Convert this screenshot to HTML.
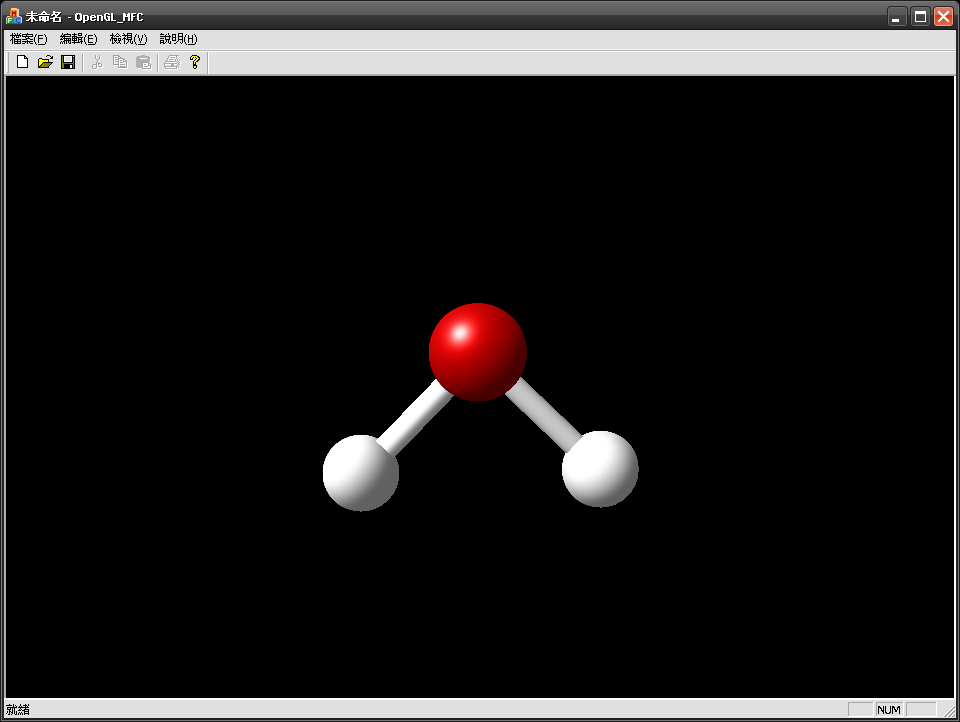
<!DOCTYPE html>
<html><head><meta charset="utf-8">
<style>
html,body{margin:0;padding:0;width:960px;height:722px;overflow:hidden;background:#000;font-family:"Liberation Sans",sans-serif;}
svg{position:absolute;left:0;top:0;}
</style></head><body>
<svg width="960" height="722" viewBox="0 0 960 722" shape-rendering="crispEdges">
<defs>
<linearGradient id="tg1" x1="0" y1="2" x2="0" y2="15" gradientUnits="userSpaceOnUse">
<stop offset="0" stop-color="#6c6c6c"/><stop offset="1" stop-color="#585858"/>
</linearGradient>
<linearGradient id="tg2" x1="0" y1="15" x2="0" y2="29" gradientUnits="userSpaceOnUse">
<stop offset="0" stop-color="#3a3a3a"/><stop offset="1" stop-color="#272727"/>
</linearGradient>
<linearGradient id="bt1" x1="0" y1="7" x2="0" y2="15" gradientUnits="userSpaceOnUse">
<stop offset="0" stop-color="#606060"/><stop offset="1" stop-color="#555555"/>
</linearGradient>
<linearGradient id="bt2" x1="0" y1="15" x2="0" y2="26" gradientUnits="userSpaceOnUse">
<stop offset="0" stop-color="#454545"/><stop offset="1" stop-color="#3c3c3c"/>
</linearGradient>
<linearGradient id="cl1" x1="0" y1="7" x2="0" y2="15" gradientUnits="userSpaceOnUse">
<stop offset="0" stop-color="#e07a66"/><stop offset="1" stop-color="#d86a52"/>
</linearGradient>
<linearGradient id="cl2" x1="0" y1="15" x2="0" y2="26" gradientUnits="userSpaceOnUse">
<stop offset="0" stop-color="#d83612"/><stop offset="1" stop-color="#e0704e"/>
</linearGradient>
</defs>
<!-- window frame -->
<g shape-rendering="auto">
<path d="M6 0H954A6 6 0 0 1 960 6V722H0V6A6 6 0 0 1 6 0Z" fill="#1c1c1c"/>
<path d="M6 1H954A5 5 0 0 1 959 6V721H1V6A5 5 0 0 1 6 1Z" fill="#7a7a7a"/>
<path d="M6 2H954A4 4 0 0 1 958 6V720H2V6A4 4 0 0 1 6 2Z" fill="#1e1e1e"/>
<path d="M6 2H954A4 4 0 0 1 958 6V718H2V6A4 4 0 0 1 6 2Z" fill="#262626"/>
<path d="M6 2H954A4 4 0 0 1 958 6V15H2V6A4 4 0 0 1 6 2Z" fill="url(#tg1)"/>
</g>
<rect x="2" y="15" width="956" height="14" fill="url(#tg2)"/>
<rect x="2" y="29" width="956" height="1" fill="#141414"/>
<!-- caption buttons -->
<g>
<rect x="887" y="6" width="21" height="21" rx="4" fill="#242424" shape-rendering="auto"/>
<rect x="888" y="7" width="19" height="19" rx="3" fill="#6c6c6c" shape-rendering="auto"/>
<rect x="889" y="8" width="17" height="7" fill="url(#bt1)"/>
<rect x="889" y="15" width="17" height="10" fill="url(#bt2)"/>
<rect x="892" y="19" width="7" height="3" fill="#fff"/>
<rect x="910" y="6" width="21" height="21" rx="4" fill="#242424" shape-rendering="auto"/>
<rect x="911" y="7" width="19" height="19" rx="3" fill="#6c6c6c" shape-rendering="auto"/>
<rect x="912" y="8" width="17" height="7" fill="url(#bt1)"/>
<rect x="912" y="15" width="17" height="10" fill="url(#bt2)"/>
<path d="M915 11h11v11h-11zM916 14v7h9v-7z" fill="#fff" fill-rule="evenodd"/>
<rect x="933" y="6" width="21" height="21" rx="4" fill="#242424" shape-rendering="auto"/>
<rect x="934" y="7" width="19" height="19" rx="3" fill="#f09a88" shape-rendering="auto"/>
<rect x="935" y="8" width="17" height="7" fill="url(#cl1)"/>
<rect x="935" y="15" width="17" height="10" fill="url(#cl2)"/>
</g>
<g shape-rendering="auto" stroke="#fff" stroke-width="2.1" stroke-linecap="square">
<path d="M939 12L948 21M948 12L939 21"/>
</g>
<!-- title icon -->
<g>
<rect x="7" y="16" width="7" height="1" fill="#b8dcb0"/>
<rect x="14" y="16" width="7" height="1" fill="#b8c8f0"/>
<rect x="21" y="17" width="1" height="6" fill="#d8d8e8"/>
<rect x="6" y="17" width="8" height="7" fill="#2a9a44"/>
<rect x="6" y="23" width="8" height="1" fill="#187030"/>
<rect x="6" y="17" width="1" height="7" fill="#9ad0a0"/>
<path d="M8 18h4v1h-3v1h2v1h-2v2h-1z" fill="#d8f0c0"/>
<rect x="14" y="17" width="7" height="7" fill="#4a8ee0"/>
<rect x="14" y="23" width="7" height="1" fill="#2a60b8"/>
<path d="M17 18h3v1h-3zM16 19h1v3h-1zM17 22h3v1h-3z" fill="#1848b0"/>
<rect x="11" y="8" width="6" height="2" fill="#f4c89a"/>
<rect x="17" y="9" width="2" height="7" fill="#d8d8d8"/>
<rect x="10" y="10" width="7" height="7" fill="#f08424"/>
<rect x="10" y="16" width="7" height="1" fill="#c05810"/>
<path d="M12 11h1v5h-1zM15 11h1v5h-1zM13 12h1v2h-1zM14 12h1v2h-1z" fill="#a81818"/>
</g>
<!-- title text -->
<g transform="translate(1,1)" fill="#140a0a">
<path d="M31 11h2v1h-2zM43 11h2v1h-2zM53 11h2v1h-2zM31 12h2v1h-2zM42 12h4v1h-4zM53 12h8v1h-8zM27 13h10v1h-10zM41 13h2v1h-2zM45 13h2v1h-2zM53 13h2v1h-2zM58 13h2v1h-2zM31 14h2v1h-2zM38 14h12v1h-12zM52 14h4v1h-4zM57 14h2v1h-2zM26 15h12v1h-12zM51 15h2v1h-2zM55 15h3v1h-3zM31 16h2v1h-2zM39 16h10v1h-10zM55 16h2v1h-2zM30 17h4v1h-4zM39 17h2v1h-2zM42 17h4v1h-4zM47 17h2v1h-2zM53 17h8v1h-8zM29 18h6v1h-6zM39 18h2v1h-2zM42 18h4v1h-4zM47 18h2v1h-2zM50 18h5v1h-5zM59 18h2v1h-2zM28 19h2v1h-2zM31 19h2v1h-2zM34 19h2v1h-2zM39 19h7v1h-7zM47 19h2v1h-2zM53 19h2v1h-2zM59 19h2v1h-2zM26 20h3v1h-3zM31 20h2v1h-2zM35 20h3v1h-3zM39 20h2v1h-2zM42 20h7v1h-7zM53 20h2v1h-2zM59 20h2v1h-2zM31 21h2v1h-2zM44 21h2v1h-2zM53 21h8v1h-8z"/><path d="M76 13h5v1h-5zM75 14h3v1h-3zM79 14h3v1h-3zM75 15h2v1h-2zM80 15h2v1h-2zM75 16h2v1h-2zM80 16h2v1h-2zM75 17h2v1h-2zM80 17h2v1h-2zM75 18h2v1h-2zM80 18h2v1h-2zM75 19h3v1h-3zM79 19h3v1h-3zM76 20h5v1h-5zM83 15h5v1h-5zM83 16h2v1h-2zM87 16h2v1h-2zM83 17h2v1h-2zM87 17h2v1h-2zM83 18h2v1h-2zM87 18h2v1h-2zM83 19h2v1h-2zM87 19h2v1h-2zM83 20h5v1h-5zM83 21h2v1h-2zM83 22h2v1h-2zM91 15h4v1h-4zM90 16h2v1h-2zM94 16h2v1h-2zM90 17h6v1h-6zM90 18h2v1h-2zM90 19h2v1h-2zM94 19h2v1h-2zM91 20h4v1h-4zM97 15h5v1h-5zM97 16h2v1h-2zM101 16h2v1h-2zM97 17h2v1h-2zM101 17h2v1h-2zM97 18h2v1h-2zM101 18h2v1h-2zM97 19h2v1h-2zM101 19h2v1h-2zM97 20h2v1h-2zM101 20h2v1h-2zM105 13h4v1h-4zM104 14h2v1h-2zM108 14h2v1h-2zM104 15h2v1h-2zM104 16h2v1h-2zM107 16h3v1h-3zM104 17h2v1h-2zM108 17h2v1h-2zM104 18h2v1h-2zM108 18h2v1h-2zM105 19h2v1h-2zM108 19h2v1h-2zM106 20h4v1h-4zM111 13h2v1h-2zM111 14h2v1h-2zM111 15h2v1h-2zM111 16h2v1h-2zM111 17h2v1h-2zM111 18h2v1h-2zM111 19h2v1h-2zM111 20h5v1h-5zM117 22h6v1h-6zM123 13h2v1h-2zM128 13h2v1h-2zM123 14h3v1h-3zM127 14h3v1h-3zM123 15h3v1h-3zM127 15h3v1h-3zM123 16h7v1h-7zM123 17h2v1h-2zM128 17h2v1h-2zM123 18h2v1h-2zM128 18h2v1h-2zM123 19h2v1h-2zM128 19h2v1h-2zM123 20h2v1h-2zM128 20h2v1h-2zM131 13h5v1h-5zM131 14h2v1h-2zM131 15h2v1h-2zM131 16h4v1h-4zM131 17h2v1h-2zM131 18h2v1h-2zM131 19h2v1h-2zM131 20h2v1h-2zM138 13h4v1h-4zM137 14h2v1h-2zM141 14h2v1h-2zM137 15h2v1h-2zM137 16h2v1h-2zM137 17h2v1h-2zM137 18h2v1h-2zM137 19h2v1h-2zM141 19h2v1h-2zM138 20h4v1h-4zM68 17h3v1h-3z"/>
</g>
<g fill="#ffffff">
<path d="M31 11h2v1h-2zM43 11h2v1h-2zM53 11h2v1h-2zM31 12h2v1h-2zM42 12h4v1h-4zM53 12h8v1h-8zM27 13h10v1h-10zM41 13h2v1h-2zM45 13h2v1h-2zM53 13h2v1h-2zM58 13h2v1h-2zM31 14h2v1h-2zM38 14h12v1h-12zM52 14h4v1h-4zM57 14h2v1h-2zM26 15h12v1h-12zM51 15h2v1h-2zM55 15h3v1h-3zM31 16h2v1h-2zM39 16h10v1h-10zM55 16h2v1h-2zM30 17h4v1h-4zM39 17h2v1h-2zM42 17h4v1h-4zM47 17h2v1h-2zM53 17h8v1h-8zM29 18h6v1h-6zM39 18h2v1h-2zM42 18h4v1h-4zM47 18h2v1h-2zM50 18h5v1h-5zM59 18h2v1h-2zM28 19h2v1h-2zM31 19h2v1h-2zM34 19h2v1h-2zM39 19h7v1h-7zM47 19h2v1h-2zM53 19h2v1h-2zM59 19h2v1h-2zM26 20h3v1h-3zM31 20h2v1h-2zM35 20h3v1h-3zM39 20h2v1h-2zM42 20h7v1h-7zM53 20h2v1h-2zM59 20h2v1h-2zM31 21h2v1h-2zM44 21h2v1h-2zM53 21h8v1h-8z"/><path d="M76 13h5v1h-5zM75 14h3v1h-3zM79 14h3v1h-3zM75 15h2v1h-2zM80 15h2v1h-2zM75 16h2v1h-2zM80 16h2v1h-2zM75 17h2v1h-2zM80 17h2v1h-2zM75 18h2v1h-2zM80 18h2v1h-2zM75 19h3v1h-3zM79 19h3v1h-3zM76 20h5v1h-5zM83 15h5v1h-5zM83 16h2v1h-2zM87 16h2v1h-2zM83 17h2v1h-2zM87 17h2v1h-2zM83 18h2v1h-2zM87 18h2v1h-2zM83 19h2v1h-2zM87 19h2v1h-2zM83 20h5v1h-5zM83 21h2v1h-2zM83 22h2v1h-2zM91 15h4v1h-4zM90 16h2v1h-2zM94 16h2v1h-2zM90 17h6v1h-6zM90 18h2v1h-2zM90 19h2v1h-2zM94 19h2v1h-2zM91 20h4v1h-4zM97 15h5v1h-5zM97 16h2v1h-2zM101 16h2v1h-2zM97 17h2v1h-2zM101 17h2v1h-2zM97 18h2v1h-2zM101 18h2v1h-2zM97 19h2v1h-2zM101 19h2v1h-2zM97 20h2v1h-2zM101 20h2v1h-2zM105 13h4v1h-4zM104 14h2v1h-2zM108 14h2v1h-2zM104 15h2v1h-2zM104 16h2v1h-2zM107 16h3v1h-3zM104 17h2v1h-2zM108 17h2v1h-2zM104 18h2v1h-2zM108 18h2v1h-2zM105 19h2v1h-2zM108 19h2v1h-2zM106 20h4v1h-4zM111 13h2v1h-2zM111 14h2v1h-2zM111 15h2v1h-2zM111 16h2v1h-2zM111 17h2v1h-2zM111 18h2v1h-2zM111 19h2v1h-2zM111 20h5v1h-5zM117 22h6v1h-6zM123 13h2v1h-2zM128 13h2v1h-2zM123 14h3v1h-3zM127 14h3v1h-3zM123 15h3v1h-3zM127 15h3v1h-3zM123 16h7v1h-7zM123 17h2v1h-2zM128 17h2v1h-2zM123 18h2v1h-2zM128 18h2v1h-2zM123 19h2v1h-2zM128 19h2v1h-2zM123 20h2v1h-2zM128 20h2v1h-2zM131 13h5v1h-5zM131 14h2v1h-2zM131 15h2v1h-2zM131 16h4v1h-4zM131 17h2v1h-2zM131 18h2v1h-2zM131 19h2v1h-2zM131 20h2v1h-2zM138 13h4v1h-4zM137 14h2v1h-2zM141 14h2v1h-2zM137 15h2v1h-2zM137 16h2v1h-2zM137 17h2v1h-2zM137 18h2v1h-2zM137 19h2v1h-2zM141 19h2v1h-2zM138 20h4v1h-4zM68 17h3v1h-3z"/>
</g>
<!-- client area background -->
<rect x="4" y="30" width="952" height="688" fill="#e0e0e0"/>
<!-- menu text -->
<path d="M12 33h1v1h-1zM14 33h1v1h-1zM17 33h1v1h-1zM20 33h1v1h-1zM27 33h1v1h-1zM12 34h1v1h-1zM15 34h1v1h-1zM17 34h1v1h-1zM19 34h1v1h-1zM22 34h11v1h-11zM10 35h11v1h-11zM22 35h1v1h-1zM26 35h1v1h-1zM32 35h1v1h-1zM12 36h1v1h-1zM14 36h1v1h-1zM16 36h1v1h-1zM18 36h1v1h-1zM20 36h1v1h-1zM22 36h11v1h-11zM12 37h2v1h-2zM16 37h3v1h-3zM25 37h1v1h-1zM28 37h1v1h-1zM12 38h1v1h-1zM14 38h1v1h-1zM26 38h4v1h-4zM11 39h2v1h-2zM14 39h7v1h-7zM22 39h5v1h-5zM30 39h3v1h-3zM10 40h1v1h-1zM12 40h1v1h-1zM14 40h1v1h-1zM17 40h1v1h-1zM20 40h1v1h-1zM27 40h1v1h-1zM12 41h1v1h-1zM14 41h7v1h-7zM22 41h11v1h-11zM12 42h1v1h-1zM14 42h1v1h-1zM17 42h1v1h-1zM20 42h1v1h-1zM25 42h1v1h-1zM27 42h1v1h-1zM29 42h1v1h-1zM12 43h1v1h-1zM14 43h7v1h-7zM22 43h3v1h-3zM27 43h1v1h-1zM30 43h3v1h-3zM36 34h1v1h-1zM35 35h1v1h-1zM35 36h1v1h-1zM34 37h1v1h-1zM34 38h1v1h-1zM34 39h1v1h-1zM34 40h1v1h-1zM34 41h1v1h-1zM35 42h1v1h-1zM35 43h1v1h-1zM36 44h1v1h-1zM38 35h5v1h-5zM38 36h1v1h-1zM38 37h1v1h-1zM38 38h5v1h-5zM38 39h1v1h-1zM38 40h1v1h-1zM38 41h1v1h-1zM38 42h1v1h-1zM38 44h6v1h-6zM44 34h1v1h-1zM45 35h1v1h-1zM45 36h1v1h-1zM46 37h1v1h-1zM46 38h1v1h-1zM46 39h1v1h-1zM46 40h1v1h-1zM46 41h1v1h-1zM45 42h1v1h-1zM45 43h1v1h-1zM44 44h1v1h-1zM62 33h1v1h-1zM67 33h1v1h-1zM74 33h1v1h-1zM78 33h4v1h-4zM62 34h1v1h-1zM64 34h7v1h-7zM72 34h5v1h-5zM78 34h1v1h-1zM81 34h1v1h-1zM61 35h1v1h-1zM63 35h2v1h-2zM70 35h1v1h-1zM74 35h1v1h-1zM78 35h4v1h-4zM60 36h11v1h-11zM72 36h5v1h-5zM62 37h1v1h-1zM64 37h1v1h-1zM72 37h1v1h-1zM74 37h1v1h-1zM76 37h7v1h-7zM61 38h1v1h-1zM63 38h8v1h-8zM72 38h5v1h-5zM78 38h1v1h-1zM81 38h1v1h-1zM60 39h3v1h-3zM64 39h1v1h-1zM66 39h1v1h-1zM68 39h1v1h-1zM70 39h1v1h-1zM72 39h1v1h-1zM74 39h1v1h-1zM76 39h1v1h-1zM78 39h4v1h-4zM64 40h7v1h-7zM72 40h5v1h-5zM78 40h1v1h-1zM81 40h1v1h-1zM61 41h1v1h-1zM63 41h2v1h-2zM66 41h1v1h-1zM68 41h1v1h-1zM70 41h1v1h-1zM74 41h1v1h-1zM78 41h1v1h-1zM80 41h3v1h-3zM60 42h1v1h-1zM62 42h1v1h-1zM64 42h1v1h-1zM66 42h1v1h-1zM68 42h1v1h-1zM70 42h1v1h-1zM72 42h8v1h-8zM81 42h1v1h-1zM60 43h1v1h-1zM62 43h1v1h-1zM64 43h1v1h-1zM66 43h1v1h-1zM69 43h2v1h-2zM74 43h1v1h-1zM81 43h1v1h-1zM86 34h1v1h-1zM85 35h1v1h-1zM85 36h1v1h-1zM84 37h1v1h-1zM84 38h1v1h-1zM84 39h1v1h-1zM84 40h1v1h-1zM84 41h1v1h-1zM85 42h1v1h-1zM85 43h1v1h-1zM86 44h1v1h-1zM88 35h5v1h-5zM88 36h1v1h-1zM88 37h1v1h-1zM88 38h5v1h-5zM88 39h1v1h-1zM88 40h1v1h-1zM88 41h1v1h-1zM88 42h5v1h-5zM88 44h6v1h-6zM94 34h1v1h-1zM95 35h1v1h-1zM95 36h1v1h-1zM96 37h1v1h-1zM96 38h1v1h-1zM96 39h1v1h-1zM96 40h1v1h-1zM96 41h1v1h-1zM95 42h1v1h-1zM95 43h1v1h-1zM94 44h1v1h-1zM112 33h1v1h-1zM117 33h1v1h-1zM123 33h1v1h-1zM127 33h5v1h-5zM112 34h1v1h-1zM116 34h1v1h-1zM118 34h1v1h-1zM124 34h1v1h-1zM127 34h1v1h-1zM131 34h1v1h-1zM110 35h4v1h-4zM115 35h1v1h-1zM119 35h1v1h-1zM122 35h10v1h-10zM112 36h1v1h-1zM114 36h1v1h-1zM116 36h3v1h-3zM120 36h1v1h-1zM125 36h1v1h-1zM127 36h1v1h-1zM131 36h1v1h-1zM111 37h2v1h-2zM124 37h1v1h-1zM127 37h5v1h-5zM111 38h6v1h-6zM118 38h3v1h-3zM123 38h3v1h-3zM127 38h1v1h-1zM131 38h1v1h-1zM110 39h1v1h-1zM112 39h1v1h-1zM114 39h1v1h-1zM116 39h1v1h-1zM118 39h1v1h-1zM120 39h1v1h-1zM122 39h1v1h-1zM124 39h1v1h-1zM126 39h6v1h-6zM110 40h1v1h-1zM112 40h1v1h-1zM114 40h3v1h-3zM118 40h3v1h-3zM124 40h1v1h-1zM128 40h1v1h-1zM130 40h1v1h-1zM112 41h1v1h-1zM115 41h1v1h-1zM119 41h1v1h-1zM124 41h1v1h-1zM128 41h1v1h-1zM130 41h1v1h-1zM132 41h1v1h-1zM112 42h1v1h-1zM114 42h1v1h-1zM116 42h1v1h-1zM118 42h2v1h-2zM124 42h1v1h-1zM127 42h1v1h-1zM130 42h1v1h-1zM132 42h1v1h-1zM112 43h2v1h-2zM117 43h1v1h-1zM120 43h1v1h-1zM124 43h1v1h-1zM126 43h1v1h-1zM131 43h2v1h-2zM136 34h1v1h-1zM135 35h1v1h-1zM135 36h1v1h-1zM134 37h1v1h-1zM134 38h1v1h-1zM134 39h1v1h-1zM134 40h1v1h-1zM134 41h1v1h-1zM135 42h1v1h-1zM135 43h1v1h-1zM136 44h1v1h-1zM138 35h1v1h-1zM142 35h1v1h-1zM138 36h1v1h-1zM142 36h1v1h-1zM138 37h1v1h-1zM142 37h1v1h-1zM139 38h1v1h-1zM141 38h1v1h-1zM139 39h1v1h-1zM141 39h1v1h-1zM139 40h1v1h-1zM141 40h1v1h-1zM140 41h1v1h-1zM140 42h1v1h-1zM138 44h6v1h-6zM144 34h1v1h-1zM145 35h1v1h-1zM145 36h1v1h-1zM146 37h1v1h-1zM146 38h1v1h-1zM146 39h1v1h-1zM146 40h1v1h-1zM146 41h1v1h-1zM145 42h1v1h-1zM145 43h1v1h-1zM144 44h1v1h-1zM161 33h1v1h-1zM168 33h1v1h-1zM178 33h5v1h-5zM160 34h4v1h-4zM166 34h1v1h-1zM168 34h1v1h-1zM172 34h4v1h-4zM178 34h1v1h-1zM182 34h1v1h-1zM165 35h1v1h-1zM169 35h1v1h-1zM172 35h1v1h-1zM175 35h1v1h-1zM178 35h1v1h-1zM182 35h1v1h-1zM160 36h11v1h-11zM172 36h1v1h-1zM175 36h1v1h-1zM178 36h5v1h-5zM165 37h1v1h-1zM169 37h1v1h-1zM172 37h4v1h-4zM178 37h1v1h-1zM182 37h1v1h-1zM160 38h4v1h-4zM165 38h1v1h-1zM169 38h1v1h-1zM172 38h1v1h-1zM175 38h1v1h-1zM178 38h1v1h-1zM182 38h1v1h-1zM165 39h5v1h-5zM172 39h1v1h-1zM175 39h1v1h-1zM178 39h5v1h-5zM160 40h4v1h-4zM166 40h1v1h-1zM168 40h1v1h-1zM172 40h4v1h-4zM178 40h1v1h-1zM182 40h1v1h-1zM160 41h1v1h-1zM163 41h1v1h-1zM166 41h1v1h-1zM168 41h1v1h-1zM170 41h1v1h-1zM177 41h1v1h-1zM182 41h1v1h-1zM160 42h4v1h-4zM165 42h1v1h-1zM168 42h1v1h-1zM170 42h1v1h-1zM176 42h1v1h-1zM180 42h1v1h-1zM182 42h1v1h-1zM160 43h1v1h-1zM163 43h2v1h-2zM169 43h2v1h-2zM174 43h2v1h-2zM181 43h1v1h-1zM186 34h1v1h-1zM185 35h1v1h-1zM185 36h1v1h-1zM184 37h1v1h-1zM184 38h1v1h-1zM184 39h1v1h-1zM184 40h1v1h-1zM184 41h1v1h-1zM185 42h1v1h-1zM185 43h1v1h-1zM186 44h1v1h-1zM188 35h1v1h-1zM192 35h1v1h-1zM188 36h1v1h-1zM192 36h1v1h-1zM188 37h1v1h-1zM192 37h1v1h-1zM188 38h5v1h-5zM188 39h1v1h-1zM192 39h1v1h-1zM188 40h1v1h-1zM192 40h1v1h-1zM188 41h1v1h-1zM192 41h1v1h-1zM188 42h1v1h-1zM192 42h1v1h-1zM188 44h6v1h-6zM194 34h1v1h-1zM195 35h1v1h-1zM195 36h1v1h-1zM196 37h1v1h-1zM196 38h1v1h-1zM196 39h1v1h-1zM196 40h1v1h-1zM196 41h1v1h-1zM195 42h1v1h-1zM195 43h1v1h-1zM194 44h1v1h-1z" fill="#000"/>
<!-- dock top etched line -->
<rect x="4" y="49" width="952" height="1" fill="#f4f4f4"/>
<rect x="4" y="50" width="952" height="1" fill="#b4b4b4"/>
<rect x="4" y="51" width="952" height="1" fill="#ffffff"/>
<!-- toolbar borders -->
<rect x="4" y="52" width="1" height="22" fill="#f8f8f8"/>
<rect x="6" y="52" width="1" height="21" fill="#ffffff"/>
<rect x="8" y="52" width="1" height="21" fill="#a8a8a8"/>
<rect x="7" y="72" width="2" height="1" fill="#a8a8a8"/>
<rect x="82" y="54" width="1" height="18" fill="#a8a8a8"/>
<rect x="83" y="54" width="1" height="18" fill="#ffffff"/>
<rect x="157" y="54" width="1" height="18" fill="#a8a8a8"/>
<rect x="158" y="54" width="1" height="18" fill="#ffffff"/>
<rect x="207" y="52" width="1" height="22" fill="#a8a8a8"/>
<rect x="208" y="52" width="1" height="22" fill="#ffffff"/>
<path d="M17 55h8v1h-8zM17 56h1v1h-1zM24 56h2v1h-2zM17 57h1v1h-1zM24 57h1v1h-1zM26 57h1v1h-1zM17 58h1v1h-1zM24 58h4v1h-4zM17 59h1v1h-1zM27 59h1v1h-1zM17 60h1v1h-1zM27 60h1v1h-1zM17 61h1v1h-1zM27 61h1v1h-1zM17 62h1v1h-1zM27 62h1v1h-1zM17 63h1v1h-1zM27 63h1v1h-1zM17 64h1v1h-1zM27 64h1v1h-1zM17 65h1v1h-1zM27 65h1v1h-1zM17 66h1v1h-1zM27 66h1v1h-1zM17 67h11v1h-11z" fill="#000000"/>
<path d="M18 56h6v1h-6zM18 57h6v1h-6zM25 57h1v1h-1zM18 58h6v1h-6zM18 59h9v1h-9zM18 60h9v1h-9zM18 61h9v1h-9zM18 62h9v1h-9zM18 63h9v1h-9zM18 64h9v1h-9zM18 65h9v1h-9zM18 66h9v1h-9z" fill="#ffffff"/>
<path d="M47 55h3v1h-3zM46 56h1v1h-1zM50 56h1v1h-1zM52 56h1v1h-1zM51 57h2v1h-2zM39 58h3v1h-3zM50 58h3v1h-3zM38 59h1v1h-1zM42 59h7v1h-7zM38 60h1v1h-1zM48 60h1v1h-1zM38 61h1v1h-1zM48 61h1v1h-1zM38 62h1v1h-1zM43 62h10v1h-10zM38 63h1v1h-1zM42 63h1v1h-1zM51 63h1v1h-1zM38 64h1v1h-1zM41 64h1v1h-1zM50 64h1v1h-1zM38 65h1v1h-1zM40 65h1v1h-1zM49 65h1v1h-1zM38 66h2v1h-2zM48 66h1v1h-1zM38 67h11v1h-11z" fill="#000000"/>
<path d="M39 59h1v1h-1zM41 59h1v1h-1zM40 60h1v1h-1zM42 60h1v1h-1zM44 60h1v1h-1zM46 60h1v1h-1zM39 61h1v1h-1zM41 61h1v1h-1zM43 61h1v1h-1zM45 61h1v1h-1zM47 61h1v1h-1zM40 62h1v1h-1zM42 62h1v1h-1zM39 63h1v1h-1zM41 63h1v1h-1zM40 64h1v1h-1zM39 65h1v1h-1z" fill="#ffff00"/>
<path d="M40 59h1v1h-1zM39 60h1v1h-1zM41 60h1v1h-1zM43 60h1v1h-1zM45 60h1v1h-1zM47 60h1v1h-1zM40 61h1v1h-1zM42 61h1v1h-1zM44 61h1v1h-1zM46 61h1v1h-1zM39 62h1v1h-1zM41 62h1v1h-1zM40 63h1v1h-1zM39 64h1v1h-1z" fill="#ffffff"/>
<path d="M43 63h8v1h-8zM42 64h8v1h-8zM41 65h8v1h-8zM40 66h8v1h-8z" fill="#808000"/>
<path d="M61 55h14v1h-14zM61 56h1v1h-1zM63 56h1v1h-1zM72 56h1v1h-1zM74 56h1v1h-1zM61 57h1v1h-1zM63 57h1v1h-1zM72 57h3v1h-3zM61 58h1v1h-1zM63 58h1v1h-1zM72 58h1v1h-1zM74 58h1v1h-1zM61 59h1v1h-1zM63 59h1v1h-1zM72 59h1v1h-1zM74 59h1v1h-1zM61 60h1v1h-1zM63 60h1v1h-1zM72 60h1v1h-1zM74 60h1v1h-1zM61 61h1v1h-1zM63 61h1v1h-1zM72 61h1v1h-1zM74 61h1v1h-1zM61 62h1v1h-1zM63 62h10v1h-10zM74 62h1v1h-1zM61 63h1v1h-1zM74 63h1v1h-1zM61 64h1v1h-1zM64 64h9v1h-9zM74 64h1v1h-1zM61 65h1v1h-1zM64 65h6v1h-6zM72 65h1v1h-1zM74 65h1v1h-1zM61 66h1v1h-1zM64 66h6v1h-6zM72 66h1v1h-1zM74 66h1v1h-1zM61 67h1v1h-1zM64 67h6v1h-6zM72 67h1v1h-1zM74 67h1v1h-1zM61 68h14v1h-14z" fill="#000000"/>
<path d="M62 56h1v1h-1zM62 57h1v1h-1zM62 58h1v1h-1zM73 58h1v1h-1zM62 59h1v1h-1zM73 59h1v1h-1zM62 60h1v1h-1zM73 60h1v1h-1zM62 61h1v1h-1zM73 61h1v1h-1zM62 62h1v1h-1zM73 62h1v1h-1zM62 63h12v1h-12zM62 64h2v1h-2zM73 64h1v1h-1zM62 65h2v1h-2zM73 65h1v1h-1zM62 66h2v1h-2zM73 66h1v1h-1zM62 67h2v1h-2zM73 67h1v1h-1z" fill="#808000"/>
<path d="M64 56h8v1h-8zM73 56h1v1h-1zM64 57h1v1h-1zM71 57h1v1h-1zM64 58h1v1h-1zM71 58h1v1h-1zM64 59h1v1h-1zM71 59h1v1h-1zM64 60h1v1h-1zM71 60h1v1h-1zM64 61h8v1h-8zM70 65h2v1h-2zM70 66h2v1h-2zM70 67h2v1h-2z" fill="#ffffff"/>
<path d="M65 57h6v1h-6zM65 58h6v1h-6zM65 59h6v1h-6zM65 60h6v1h-6z" fill="#e0e0e0"/>
<path d="M96 56h1v1h-1zM100 56h1v1h-1zM96 57h1v1h-1zM100 57h1v1h-1zM96 58h1v1h-1zM100 58h1v1h-1zM96 59h1v1h-1zM100 59h1v1h-1zM97 60h1v1h-1zM99 60h1v1h-1zM98 61h1v1h-1zM98 62h1v1h-1zM97 63h1v1h-1zM99 63h1v1h-1zM97 64h1v1h-1zM99 64h3v1h-3zM94 65h4v1h-4zM99 65h1v1h-1zM102 65h1v1h-1zM93 66h1v1h-1zM97 66h1v1h-1zM99 66h1v1h-1zM102 66h1v1h-1zM93 67h1v1h-1zM97 67h1v1h-1zM100 67h3v1h-3zM93 68h1v1h-1zM97 68h1v1h-1zM94 69h3v1h-3z" fill="#ffffff"/>
<path d="M95 55h1v1h-1zM99 55h1v1h-1zM95 56h1v1h-1zM99 56h1v1h-1zM95 57h1v1h-1zM99 57h1v1h-1zM95 58h1v1h-1zM99 58h1v1h-1zM96 59h1v1h-1zM98 59h1v1h-1zM97 60h1v1h-1zM97 61h1v1h-1zM96 62h1v1h-1zM98 62h1v1h-1zM96 63h1v1h-1zM98 63h3v1h-3zM93 64h4v1h-4zM98 64h1v1h-1zM101 64h1v1h-1zM92 65h1v1h-1zM96 65h1v1h-1zM98 65h1v1h-1zM101 65h1v1h-1zM92 66h1v1h-1zM96 66h1v1h-1zM99 66h3v1h-3zM92 67h1v1h-1zM96 67h1v1h-1zM93 68h3v1h-3z" fill="#a0a0a0"/>
<path d="M114 56h6v1h-6zM114 57h1v1h-1zM119 57h2v1h-2zM114 58h1v1h-1zM116 58h2v1h-2zM119 58h1v1h-1zM121 58h1v1h-1zM114 59h1v1h-1zM119 59h6v1h-6zM114 60h1v1h-1zM116 60h4v1h-4zM124 60h2v1h-2zM114 61h1v1h-1zM119 61h1v1h-1zM121 61h2v1h-2zM124 61h1v1h-1zM126 61h1v1h-1zM114 62h1v1h-1zM116 62h4v1h-4zM124 62h4v1h-4zM114 63h1v1h-1zM119 63h1v1h-1zM121 63h3v1h-3zM127 63h1v1h-1zM114 64h1v1h-1zM119 64h1v1h-1zM127 64h1v1h-1zM114 65h6v1h-6zM121 65h5v1h-5zM127 65h1v1h-1zM119 66h1v1h-1zM127 66h1v1h-1zM119 67h1v1h-1zM121 67h5v1h-5zM127 67h1v1h-1zM119 68h9v1h-9z" fill="#ffffff"/>
<path d="M113 55h6v1h-6zM113 56h1v1h-1zM118 56h2v1h-2zM113 57h1v1h-1zM115 57h2v1h-2zM118 57h1v1h-1zM120 57h1v1h-1zM113 58h1v1h-1zM118 58h6v1h-6zM113 59h1v1h-1zM115 59h4v1h-4zM123 59h2v1h-2zM113 60h1v1h-1zM118 60h1v1h-1zM120 60h2v1h-2zM123 60h1v1h-1zM125 60h1v1h-1zM113 61h1v1h-1zM115 61h4v1h-4zM123 61h4v1h-4zM113 62h1v1h-1zM118 62h1v1h-1zM120 62h3v1h-3zM126 62h1v1h-1zM113 63h1v1h-1zM118 63h1v1h-1zM126 63h1v1h-1zM113 64h6v1h-6zM120 64h5v1h-5zM126 64h1v1h-1zM118 65h1v1h-1zM126 65h1v1h-1zM118 66h1v1h-1zM120 66h5v1h-5zM126 66h1v1h-1zM118 67h9v1h-9z" fill="#a0a0a0"/>
<path d="M142 56h4v1h-4zM138 57h12v1h-12zM137 58h14v1h-14zM137 59h14v1h-14zM137 60h14v1h-14zM137 61h14v1h-14zM137 62h14v1h-14zM137 63h13v1h-13zM137 64h14v1h-14zM137 65h15v1h-15zM137 66h15v1h-15zM137 67h15v1h-15zM138 68h14v1h-14zM143 69h9v1h-9z" fill="#ffffff"/>
<path d="M141 55h4v1h-4zM137 56h12v1h-12zM136 57h14v1h-14zM136 58h4v1h-4zM147 58h3v1h-3zM136 59h14v1h-14zM136 60h14v1h-14zM136 61h14v1h-14zM136 62h6v1h-6zM136 63h6v1h-6zM136 64h6v1h-6zM136 65h6v1h-6zM136 66h6v1h-6zM137 67h5v1h-5z" fill="#b0b0b0"/>
<path d="M140 58h7v1h-7zM143 63h5v1h-5zM143 64h1v1h-1zM146 64h2v1h-2zM149 64h1v1h-1zM143 65h5v1h-5zM143 66h1v1h-1zM148 66h2v1h-2zM143 67h7v1h-7z" fill="#ffffff"/>
<path d="M142 62h7v1h-7zM142 63h1v1h-1zM148 63h2v1h-2zM142 64h1v1h-1zM144 64h2v1h-2zM148 64h1v1h-1zM150 64h1v1h-1zM142 65h1v1h-1zM148 65h3v1h-3zM142 66h1v1h-1zM144 66h4v1h-4zM150 66h1v1h-1zM142 67h1v1h-1zM150 67h1v1h-1zM142 68h9v1h-9z" fill="#a0a0a0"/>
<path d="M170 56h10v1h-10zM169 57h1v1h-1zM177 57h1v1h-1zM169 58h1v1h-1zM171 58h5v1h-5zM177 58h1v1h-1zM168 59h1v1h-1zM177 59h1v1h-1zM168 60h1v1h-1zM170 60h5v1h-5zM176 60h1v1h-1zM178 60h1v1h-1zM167 61h1v1h-1zM176 61h1v1h-1zM178 61h1v1h-1zM180 61h1v1h-1zM166 62h12v1h-12zM179 62h1v1h-1zM165 63h1v1h-1zM178 63h1v1h-1zM180 63h1v1h-1zM165 64h13v1h-13zM179 64h1v1h-1zM165 65h1v1h-1zM172 65h3v1h-3zM178 65h1v1h-1zM180 65h1v1h-1zM165 66h1v1h-1zM172 66h3v1h-3zM177 66h1v1h-1zM179 66h1v1h-1zM165 67h14v1h-14zM166 68h1v1h-1zM177 68h1v1h-1zM179 68h1v1h-1zM167 69h11v1h-11z" fill="#ffffff"/>
<path d="M169 55h10v1h-10zM168 56h1v1h-1zM176 56h1v1h-1zM168 57h1v1h-1zM170 57h5v1h-5zM176 57h1v1h-1zM167 58h1v1h-1zM176 58h1v1h-1zM167 59h1v1h-1zM169 59h5v1h-5zM175 59h1v1h-1zM177 59h1v1h-1zM166 60h1v1h-1zM175 60h1v1h-1zM177 60h1v1h-1zM179 60h1v1h-1zM165 61h12v1h-12zM178 61h1v1h-1zM164 62h1v1h-1zM177 62h1v1h-1zM179 62h1v1h-1zM164 63h13v1h-13zM178 63h1v1h-1zM164 64h1v1h-1zM171 64h3v1h-3zM177 64h1v1h-1zM179 64h1v1h-1zM164 65h1v1h-1zM171 65h3v1h-3zM176 65h1v1h-1zM178 65h1v1h-1zM164 66h14v1h-14zM165 67h1v1h-1zM176 67h1v1h-1zM178 67h1v1h-1zM166 68h11v1h-11z" fill="#a8a8a8"/>
<path d="M192 55h5v1h-5zM191 56h1v1h-1zM197 56h2v1h-2zM190 57h1v1h-1zM193 57h1v1h-1zM195 57h1v1h-1zM198 57h2v1h-2zM190 58h1v1h-1zM192 58h1v1h-1zM196 58h1v1h-1zM199 58h1v1h-1zM190 59h3v1h-3zM195 59h1v1h-1zM198 59h2v1h-2zM194 60h1v1h-1zM197 60h2v1h-2zM193 61h1v1h-1zM196 61h2v1h-2zM193 62h1v1h-1zM195 62h1v1h-1zM193 63h1v1h-1zM195 63h1v1h-1zM193 64h3v1h-3zM193 65h4v1h-4zM193 66h1v1h-1zM196 66h1v1h-1zM193 67h1v1h-1zM196 67h1v1h-1zM194 68h2v1h-2z" fill="#000000"/>
<path d="M192 56h5v1h-5zM191 57h2v1h-2zM196 57h2v1h-2zM191 58h1v1h-1zM197 58h2v1h-2zM196 59h2v1h-2zM195 60h2v1h-2zM194 61h2v1h-2zM194 62h1v1h-1zM194 63h1v1h-1zM194 66h2v1h-2zM194 67h2v1h-2z" fill="#ffff00"/>
<path d="M194 57h1v1h-1z" fill="#ffffff"/>
<!-- canvas sunken border -->
<rect x="4" y="74" width="952" height="1" fill="#b4b4b4"/>
<rect x="4" y="75" width="952" height="1" fill="#a0a0a0"/>
<rect x="4" y="76" width="2" height="622" fill="#b0b0b0"/>
<rect x="954" y="76" width="2" height="624" fill="#ffffff"/>
<rect x="4" y="698" width="952" height="2" fill="#ffffff"/>
<rect x="6" y="76" width="948" height="622" fill="#000000"/>
<!-- status bar -->
<path d="M9 704h1v1h-1zM13 704h1v1h-1zM20 704h1v1h-1zM25 704h1v1h-1zM28 704h1v1h-1zM6 705h6v1h-6zM13 705h1v1h-1zM15 705h1v1h-1zM20 705h1v1h-1zM23 705h4v1h-4zM28 705h1v1h-1zM13 706h1v1h-1zM16 706h1v1h-1zM19 706h1v1h-1zM21 706h1v1h-1zM25 706h1v1h-1zM27 706h1v1h-1zM7 707h10v1h-10zM18 707h11v1h-11zM7 708h1v1h-1zM10 708h1v1h-1zM12 708h1v1h-1zM14 708h1v1h-1zM20 708h1v1h-1zM25 708h1v1h-1zM7 709h4v1h-4zM12 709h1v1h-1zM14 709h1v1h-1zM19 709h1v1h-1zM21 709h1v1h-1zM24 709h5v1h-5zM9 710h1v1h-1zM12 710h1v1h-1zM14 710h1v1h-1zM18 710h3v1h-3zM22 710h3v1h-3zM28 710h1v1h-1zM7 711h1v1h-1zM9 711h2v1h-2zM12 711h1v1h-1zM14 711h1v1h-1zM16 711h1v1h-1zM24 711h5v1h-5zM7 712h1v1h-1zM9 712h1v1h-1zM11 712h2v1h-2zM14 712h1v1h-1zM16 712h1v1h-1zM19 712h1v1h-1zM21 712h1v1h-1zM24 712h1v1h-1zM28 712h1v1h-1zM6 713h1v1h-1zM9 713h1v1h-1zM12 713h1v1h-1zM14 713h1v1h-1zM16 713h1v1h-1zM18 713h1v1h-1zM20 713h1v1h-1zM22 713h1v1h-1zM24 713h5v1h-5zM8 714h2v1h-2zM11 714h1v1h-1zM15 714h2v1h-2zM18 714h1v1h-1zM20 714h1v1h-1zM22 714h1v1h-1zM24 714h1v1h-1zM28 714h1v1h-1z" fill="#000"/>
<g fill="#a8a8a8">
<rect x="848" y="702" width="26" height="1"/><rect x="848" y="702" width="1" height="15"/>
<rect x="876" y="702" width="28" height="1"/><rect x="876" y="702" width="1" height="15"/>
<rect x="906" y="702" width="31" height="1"/><rect x="906" y="702" width="1" height="15"/>
</g>
<g fill="#ffffff">
<rect x="848" y="716" width="26" height="1"/><rect x="873" y="702" width="1" height="15"/>
<rect x="876" y="716" width="28" height="1"/><rect x="903" y="702" width="1" height="15"/>
<rect x="906" y="716" width="31" height="1"/><rect x="936" y="702" width="1" height="15"/>
</g>
<path d="M878 706h2v1h-2zM883 706h1v1h-1zM885 706h1v1h-1zM890 706h1v1h-1zM892 706h2v1h-2zM898 706h2v1h-2zM878 707h3v1h-3zM883 707h1v1h-1zM885 707h1v1h-1zM890 707h1v1h-1zM892 707h3v1h-3zM897 707h3v1h-3zM878 708h1v1h-1zM880 708h2v1h-2zM883 708h1v1h-1zM885 708h1v1h-1zM890 708h1v1h-1zM892 708h1v1h-1zM894 708h1v1h-1zM897 708h1v1h-1zM899 708h1v1h-1zM878 709h1v1h-1zM881 709h1v1h-1zM883 709h1v1h-1zM885 709h1v1h-1zM890 709h1v1h-1zM892 709h1v1h-1zM894 709h2v1h-2zM897 709h1v1h-1zM899 709h1v1h-1zM878 710h1v1h-1zM881 710h3v1h-3zM885 710h1v1h-1zM890 710h1v1h-1zM892 710h1v1h-1zM895 710h2v1h-2zM899 710h1v1h-1zM878 711h1v1h-1zM882 711h2v1h-2zM885 711h1v1h-1zM890 711h1v1h-1zM892 711h1v1h-1zM895 711h2v1h-2zM899 711h1v1h-1zM878 712h1v1h-1zM883 712h1v1h-1zM885 712h2v1h-2zM889 712h2v1h-2zM892 712h1v1h-1zM899 712h1v1h-1zM878 713h1v1h-1zM883 713h1v1h-1zM886 713h4v1h-4zM892 713h1v1h-1zM899 713h1v1h-1z" fill="#000"/>
<!-- size grip -->
<path d="M954 705h1v1h-1zM953 706h1v1h-1zM952 707h1v1h-1zM951 708h1v1h-1zM950 709h1v1h-1zM954 709h1v1h-1zM949 710h1v1h-1zM953 710h1v1h-1zM948 711h1v1h-1zM952 711h1v1h-1zM947 712h1v1h-1zM951 712h1v1h-1zM946 713h1v1h-1zM950 713h1v1h-1zM954 713h1v1h-1zM945 714h1v1h-1zM949 714h1v1h-1zM953 714h1v1h-1zM944 715h1v1h-1zM948 715h1v1h-1zM952 715h1v1h-1zM943 716h1v1h-1zM947 716h1v1h-1zM951 716h1v1h-1z" fill="#ffffff"/><path d="M954 706h1v1h-1zM953 707h1v1h-1zM954 707h1v1h-1zM952 708h1v1h-1zM953 708h1v1h-1zM951 709h1v1h-1zM952 709h1v1h-1zM950 710h1v1h-1zM951 710h1v1h-1zM954 710h1v1h-1zM949 711h1v1h-1zM950 711h1v1h-1zM953 711h1v1h-1zM954 711h1v1h-1zM948 712h1v1h-1zM949 712h1v1h-1zM952 712h1v1h-1zM953 712h1v1h-1zM947 713h1v1h-1zM948 713h1v1h-1zM951 713h1v1h-1zM952 713h1v1h-1zM946 714h1v1h-1zM947 714h1v1h-1zM950 714h1v1h-1zM951 714h1v1h-1zM954 714h1v1h-1zM945 715h1v1h-1zM946 715h1v1h-1zM949 715h1v1h-1zM950 715h1v1h-1zM953 715h1v1h-1zM954 715h1v1h-1zM944 716h1v1h-1zM945 716h1v1h-1zM948 716h1v1h-1zM949 716h1v1h-1zM952 716h1v1h-1zM953 716h1v1h-1z" fill="#a0a0a0"/>
</svg>
<svg width="960" height="722" viewBox="0 0 960 722">
<defs><linearGradient id="bg1" gradientUnits="userSpaceOnUse" x1="469.44" y1="344.23" x2="487.28" y2="361.46"><stop offset="0.000" stop-color="#ffffff"/><stop offset="0.050" stop-color="#ffffff"/><stop offset="0.100" stop-color="#ffffff"/><stop offset="0.150" stop-color="#ffffff"/><stop offset="0.200" stop-color="#ffffff"/><stop offset="0.250" stop-color="#ffffff"/><stop offset="0.300" stop-color="#ffffff"/><stop offset="0.350" stop-color="#ffffff"/><stop offset="0.400" stop-color="#ffffff"/><stop offset="0.450" stop-color="#ffffff"/><stop offset="0.500" stop-color="#f6f6f6"/><stop offset="0.550" stop-color="#ededed"/><stop offset="0.600" stop-color="#d6d6d6"/><stop offset="0.650" stop-color="#bfbfbf"/><stop offset="0.700" stop-color="#a7a7a7"/><stop offset="0.750" stop-color="#8f8f8f"/><stop offset="0.800" stop-color="#818181"/><stop offset="0.850" stop-color="#737373"/><stop offset="0.900" stop-color="#6f6f6f"/><stop offset="0.950" stop-color="#6c6c6c"/><stop offset="1.000" stop-color="#696969"/></linearGradient><linearGradient id="bg2" gradientUnits="userSpaceOnUse" x1="486.28" y1="343.82" x2="469.72" y2="361.18"><stop offset="0.000" stop-color="#737373"/><stop offset="0.050" stop-color="#979797"/><stop offset="0.100" stop-color="#a5a5a5"/><stop offset="0.150" stop-color="#afafaf"/><stop offset="0.200" stop-color="#b6b6b6"/><stop offset="0.250" stop-color="#bcbcbc"/><stop offset="0.300" stop-color="#c0c0c0"/><stop offset="0.350" stop-color="#c3c3c3"/><stop offset="0.400" stop-color="#c5c5c5"/><stop offset="0.450" stop-color="#c6c6c6"/><stop offset="0.500" stop-color="#c7c7c7"/><stop offset="0.550" stop-color="#c6c6c6"/><stop offset="0.600" stop-color="#c5c5c5"/><stop offset="0.650" stop-color="#c3c3c3"/><stop offset="0.700" stop-color="#c0c0c0"/><stop offset="0.750" stop-color="#bcbcbc"/><stop offset="0.800" stop-color="#b6b6b6"/><stop offset="0.850" stop-color="#afafaf"/><stop offset="0.900" stop-color="#a5a5a5"/><stop offset="0.950" stop-color="#979797"/><stop offset="1.000" stop-color="#737373"/></linearGradient></defs>
<path d="M323.00 473.40a38.20 38.20 0 1 0 76.40 0a38.20 38.20 0 1 0 -76.40 0Z" shape-rendering="crispEdges" fill="#616161"/>
<path d="M374.8 437.7L366.5 435.5L359.2 435.2L353.0 436.0L346.2 438.2L338.3 442.7L332.7 447.8L328.7 453.2L325.3 460.0L323.5 466.7L323.0 475.8L324.0 482.3L326.0 488.3L329.3 494.5L335.3 501.5L340.8 505.7L347.5 509.0L349.3 509.5L360.3 503.3L367.3 498.0L373.5 492.0L379.3 485.0L383.3 479.2L386.7 473.3L389.8 466.2L392.2 458.5L393.3 452.8L390.0 448.3L386.0 444.3L380.7 440.5Z" fill="#646464"/>
<path d="M374.8 437.7L366.5 435.5L359.2 435.2L353.0 436.0L346.2 438.2L338.3 442.7L332.7 447.8L328.7 453.2L325.3 460.0L323.5 466.7L323.0 475.8L324.0 482.3L326.0 488.3L329.3 494.5L335.3 501.5L340.8 505.7L347.5 508.8L358.8 502.8L364.8 498.5L371.3 492.5L377.0 486.0L381.7 479.5L384.8 474.2L388.3 466.7L390.2 461.2L392.3 451.3L390.0 448.3L384.3 443.0L379.5 439.8Z" fill="#666666"/>
<path d="M376.8 438.5L370.0 436.2L363.0 435.2L354.7 435.7L348.3 437.3L342.2 440.2L335.7 444.8L330.0 451.2L326.5 457.2L324.2 463.7L323.0 470.8L323.3 478.8L325.3 486.7L328.5 493.2L333.0 499.2L338.8 504.3L345.5 508.2L346.5 508.3L357.0 503.0L363.5 498.5L369.2 493.5L374.0 488.3L378.8 482.2L382.8 476.0L386.0 470.0L389.2 461.7L391.7 450.5L386.0 444.3L382.0 441.3Z" fill="#686868"/>
<path d="M376.8 438.5L370.0 436.2L363.0 435.2L354.7 435.7L348.3 437.3L342.2 440.2L335.7 444.8L330.0 451.2L326.5 457.2L324.2 463.7L323.0 470.8L323.3 478.8L325.3 486.7L328.5 493.2L333.0 499.2L338.8 504.3L345.2 508.0L357.7 501.8L367.3 494.3L372.8 488.7L377.7 482.7L382.2 475.8L385.7 469.2L388.7 461.0L391.0 449.7L384.3 443.0Z" fill="#6a6a6a"/>
<path d="M376.8 438.5L370.0 436.2L363.0 435.2L354.7 435.7L348.3 437.3L342.2 440.2L335.7 444.8L330.0 451.2L326.5 457.2L324.2 463.7L323.0 470.8L323.3 478.8L325.3 486.7L328.5 493.2L333.0 499.2L338.8 504.3L344.5 507.7L357.7 501.2L366.3 494.5L371.3 489.5L376.3 483.5L380.5 477.5L384.5 470.3L388.3 460.2L390.5 449.0L384.3 443.0Z" fill="#6c6c6c"/>
<path d="M379.5 439.8L371.8 436.7L365.2 435.3L357.2 435.3L349.8 436.8L344.0 439.2L336.8 443.8L331.7 449.0L327.3 455.5L324.5 462.5L323.2 469.0L323.0 475.8L324.5 484.2L327.0 490.5L331.2 497.0L336.7 502.7L342.5 506.7L344.0 507.3L350.7 504.3L357.0 501.0L363.7 496.2L370.3 489.8L374.7 484.8L380.0 477.3L382.8 472.5L385.7 466.5L387.5 461.3L390.2 448.7L386.0 444.3Z" fill="#6e6e6e"/>
<path d="M379.5 439.8L371.8 436.7L365.2 435.3L357.2 435.3L349.8 436.8L344.0 439.2L336.8 443.8L331.7 449.0L327.3 455.5L324.5 462.5L323.2 469.0L323.0 475.8L324.5 484.2L327.0 490.5L331.2 497.0L336.7 502.7L342.5 506.7L343.5 507.0L355.0 501.7L364.3 495.0L373.7 485.3L381.7 473.7L384.8 467.3L386.8 462.0L389.7 448.0L386.0 444.3Z" fill="#707070"/>
<path d="M379.5 439.8L371.8 436.7L365.2 435.3L357.2 435.3L349.8 436.8L344.0 439.2L336.8 443.8L331.7 449.0L327.3 455.5L324.5 462.5L323.2 469.0L323.0 475.8L324.5 484.2L327.0 490.5L331.2 497.0L336.7 502.7L342.5 506.7L354.2 501.7L358.5 499.0L363.7 495.0L372.8 485.7L377.2 480.0L381.8 472.5L386.5 461.7L389.3 447.7L384.3 443.0Z" fill="#727272"/>
<path d="M379.5 439.8L371.8 436.7L365.2 435.3L359.2 435.2L351.0 436.5L344.0 439.2L337.7 443.2L332.7 447.8L328.2 454.0L325.3 460.0L323.2 469.0L323.0 475.8L324.2 483.0L327.0 490.5L331.2 497.0L336.7 502.7L342.3 506.5L353.3 501.7L362.7 495.3L369.7 488.7L373.0 484.8L381.0 473.2L384.0 467.2L386.3 460.8L388.8 447.2L384.3 443.0Z" fill="#747474"/>
<path d="M380.7 440.5L374.8 437.7L366.5 435.5L359.2 435.2L353.0 436.0L346.2 438.2L339.5 441.8L332.7 447.8L328.7 453.2L325.3 460.0L323.5 466.7L323.0 475.8L324.0 482.3L327.0 490.5L330.2 495.7L335.3 501.5L340.8 505.7L342.0 506.2L351.5 502.2L360.2 496.8L365.7 492.2L370.5 487.2L378.7 476.3L381.8 470.8L385.0 463.7L386.8 457.3L388.5 446.8L386.0 444.3Z" fill="#767676"/>
<path d="M380.7 440.5L374.8 437.7L366.5 435.5L359.2 435.2L353.0 436.0L346.2 438.2L339.5 441.8L332.7 447.8L328.7 453.2L325.3 460.0L323.5 466.7L323.0 475.8L324.0 482.3L327.0 490.5L330.2 495.7L335.3 501.5L341.5 506.0L353.7 500.7L362.5 494.5L368.0 489.3L372.2 484.7L379.2 474.8L382.7 468.3L385.7 460.5L388.2 446.8L386.0 444.3Z" fill="#787878"/>
<path d="M382.0 441.3L374.8 437.7L367.5 435.7L359.2 435.2L353.0 436.0L346.2 438.2L339.5 441.8L332.7 447.8L328.7 453.2L325.3 460.0L323.5 466.7L323.0 475.8L324.0 482.3L327.0 490.5L330.2 495.7L335.3 501.5L340.8 505.7L353.8 500.2L361.3 495.0L365.8 491.0L370.8 485.7L378.3 475.5L382.5 467.8L385.2 461.0L387.8 446.5L386.0 444.3Z" fill="#7a7a7a"/>
<path d="M382.0 441.3L376.8 438.5L370.0 436.2L363.0 435.2L354.7 435.7L347.0 437.8L340.5 441.2L335.7 444.8L330.0 451.2L326.5 457.2L323.8 465.0L323.0 470.8L323.3 478.8L325.3 486.7L328.5 493.2L333.0 499.2L338.8 504.3L340.7 505.5L350.5 501.5L357.7 497.3L362.0 494.0L367.5 488.8L376.2 478.2L382.5 467.0L385.0 460.3L386.2 455.3L387.5 445.8Z" fill="#7c7c7c"/>
<path d="M382.0 441.3L376.8 438.5L370.0 436.2L363.0 435.2L354.7 435.7L347.0 437.8L340.5 441.2L335.7 444.8L330.0 451.2L326.5 457.2L323.8 465.0L323.0 470.8L323.3 478.8L325.3 486.7L328.5 493.2L333.0 499.2L338.8 504.3L340.2 505.2L349.7 501.5L357.3 497.2L361.7 493.8L367.5 488.3L375.2 479.0L378.8 473.3L382.5 466.2L384.7 460.3L385.8 455.3L387.2 445.5Z" fill="#7e7e7e"/>
<path d="M382.5 441.7L376.8 438.5L370.0 436.2L363.0 435.2L354.7 435.7L347.0 437.8L340.5 441.2L335.7 444.8L330.0 451.2L326.5 457.2L323.8 465.0L323.0 470.8L323.3 478.8L325.3 486.7L328.5 493.2L333.0 499.2L339.8 505.0L349.7 501.2L358.2 496.2L367.7 487.7L375.3 478.2L381.8 466.8L384.2 460.8L385.5 455.3L386.8 445.2Z" fill="#808080"/>
<path d="M382.5 441.7L376.8 438.5L370.0 436.2L363.0 435.2L354.7 435.7L347.0 437.8L340.5 441.2L335.7 444.8L330.0 451.2L326.5 457.2L323.8 465.0L323.0 470.8L323.3 478.8L325.3 486.7L328.5 493.2L333.0 499.2L338.8 504.3L339.7 504.7L350.0 500.7L357.8 496.0L362.0 492.7L367.7 487.2L375.2 477.8L381.2 467.5L384.8 457.2L386.5 444.8Z" fill="#828282"/>
<path d="M382.5 441.7L376.8 438.5L370.0 436.2L363.0 435.2L354.7 435.7L347.0 437.8L340.5 441.2L335.7 444.8L330.0 451.2L326.5 457.2L323.8 465.0L323.0 470.8L323.3 478.8L325.3 486.7L328.5 493.2L333.0 499.2L338.8 504.3L350.3 500.2L357.5 495.8L363.0 491.3L367.8 486.5L375.3 477.0L381.3 466.3L384.5 457.2L386.2 444.5Z" fill="#838383"/>
<path d="M383.7 442.5L376.8 438.5L370.7 436.3L363.0 435.2L355.8 435.5L348.3 437.3L342.2 440.2L335.7 444.8L331.0 449.8L326.5 457.2L324.2 463.7L323.0 470.8L323.2 477.7L324.5 484.2L328.0 492.3L331.8 497.8L337.5 503.3L339.0 504.2L348.8 500.5L354.5 497.5L362.3 491.5L367.8 486.0L372.7 480.2L379.0 470.3L381.5 465.2L383.7 459.2L384.7 454.7L385.8 444.3Z" fill="#858585"/>
<path d="M383.7 442.5L376.8 438.5L370.7 436.3L363.0 435.2L355.8 435.5L348.3 437.3L342.2 440.2L335.7 444.8L331.0 449.8L326.5 457.2L324.2 463.7L323.0 470.8L323.2 477.7L324.5 484.2L328.0 492.3L331.8 497.8L338.5 504.0L347.7 500.7L354.2 497.3L358.0 494.7L364.0 489.5L372.0 480.5L379.3 469.0L383.3 459.2L384.5 453.8L385.5 444.0Z" fill="#878787"/>
<path d="M376.8 438.5L370.7 436.3L363.0 435.2L355.8 435.5L348.3 437.3L342.2 440.2L335.7 444.8L331.0 449.8L326.5 457.2L324.2 463.7L323.0 470.8L323.2 477.7L324.5 484.2L328.0 492.3L331.8 497.8L337.5 503.3L338.3 503.7L347.7 500.3L356.3 495.5L363.0 490.0L371.8 480.2L377.5 471.7L381.8 462.7L384.2 454.0L385.2 443.7Z" fill="#898989"/>
<path d="M384.3 443.0L376.8 438.5L370.7 436.3L363.0 435.2L355.8 435.5L348.3 437.3L342.2 440.2L335.7 444.8L331.0 449.8L326.5 457.2L324.2 463.7L323.0 470.8L323.2 477.7L324.5 484.2L328.0 492.3L331.8 497.8L337.5 503.3L348.8 499.5L356.0 495.3L362.2 490.3L371.2 480.5L376.8 472.2L381.7 462.2L384.0 453.0L384.8 444.3Z" fill="#8b8b8b"/>
<path d="M384.3 443.0L376.8 438.5L370.7 436.3L363.0 435.2L355.8 435.5L348.3 437.3L342.2 440.2L335.7 444.8L331.0 449.8L326.5 457.2L324.2 463.7L323.0 470.8L323.2 477.7L324.5 484.2L327.0 490.5L331.2 497.0L336.7 502.7L337.7 503.2L346.0 500.3L353.2 496.8L361.5 490.5L366.8 485.2L371.0 480.2L376.8 471.5L381.3 462.2L383.5 454.3Z" fill="#8d8d8d"/>
<path d="M384.3 443.0L376.8 438.5L370.7 436.3L363.0 435.2L355.8 435.5L348.3 437.3L342.2 440.2L335.7 444.8L331.0 449.8L326.5 457.2L324.2 463.7L323.0 470.8L323.2 477.7L324.5 484.2L327.0 490.5L331.2 497.0L337.2 503.0L346.0 500.0L352.8 496.7L361.0 490.5L370.3 480.5L376.7 471.2L381.0 462.2L383.2 454.5Z" fill="#8f8f8f"/>
<path d="M383.7 442.5L376.8 438.5L370.7 436.3L363.0 435.2L355.8 435.5L348.3 437.3L342.2 440.2L335.7 444.8L331.0 449.8L326.5 457.2L324.2 463.7L323.0 470.8L323.2 477.7L324.5 484.2L327.0 490.5L331.2 497.0L336.7 502.7L347.3 499.2L354.3 495.3L362.2 489.0L370.2 480.2L376.0 471.7L380.8 461.7L383.0 453.5Z" fill="#919191"/>
<path d="M383.7 442.5L376.8 438.5L370.7 436.3L363.0 435.2L355.8 435.5L348.3 437.3L342.2 440.2L335.7 444.8L331.0 449.8L326.5 457.2L324.2 463.7L323.0 470.8L323.2 477.7L324.5 484.2L327.0 490.5L331.2 497.0L336.5 502.5L347.3 498.8L353.5 495.5L361.5 489.2L369.5 480.5L376.0 471.0L380.5 461.7L382.7 453.8Z" fill="#939393"/>
<path d="M383.2 442.2L376.8 438.5L370.0 436.2L363.0 435.2L354.7 435.7L348.3 437.3L342.2 440.2L335.7 444.8L331.0 449.8L326.5 457.2L324.2 463.7L323.0 470.8L323.2 477.7L324.5 484.2L327.0 490.5L331.2 497.0L336.2 502.2L347.3 498.5L354.2 494.7L360.8 489.3L370.0 479.3L376.7 469.2L380.3 461.2L382.5 452.8Z" fill="#959595"/>
<path d="M382.5 441.7L376.8 438.5L370.0 436.2L363.0 435.2L354.7 435.7L348.3 437.3L342.2 440.2L335.7 444.8L331.0 449.8L327.3 455.5L324.5 462.5L323.2 469.0L323.0 475.8L324.2 483.0L327.0 490.5L331.2 497.0L335.3 501.5L336.2 501.8L345.7 498.8L352.8 495.2L360.2 489.5L365.7 484.0L369.8 479.0L376.0 469.7L380.0 461.2L382.2 453.0L382.8 443.3Z" fill="#979797"/>
<path d="M382.5 441.7L376.8 438.5L370.0 436.2L363.0 435.2L354.7 435.7L348.3 437.3L342.2 440.2L335.7 444.8L331.0 449.8L327.3 455.5L324.5 462.5L323.2 469.0L323.0 475.8L324.2 483.0L327.0 490.5L331.2 497.0L335.3 501.5L346.2 498.3L352.5 495.0L361.8 487.5L368.5 480.2L374.7 471.3L379.8 460.7L382.0 452.0Z" fill="#999999"/>
<path d="M382.0 441.3L376.8 438.5L370.0 436.2L363.0 435.2L354.7 435.7L348.3 437.3L342.2 440.2L335.7 444.8L331.0 449.8L327.3 455.5L324.5 462.5L323.2 469.0L323.0 475.8L324.2 483.0L327.0 490.5L331.2 497.0L335.2 501.3L346.2 498.0L352.2 494.8L361.0 487.8L368.3 479.8L374.7 470.7L379.5 460.7L381.7 452.2Z" fill="#9b9b9b"/>
<path d="M382.0 441.3L376.8 438.5L370.0 436.2L363.0 435.2L354.7 435.7L348.3 437.3L342.2 440.2L335.7 444.8L331.0 449.8L327.3 455.5L324.5 462.5L323.2 469.0L323.0 475.8L324.2 483.0L327.0 490.5L330.2 495.7L334.8 501.0L345.3 498.0L351.8 494.7L360.3 488.0L368.2 479.5L374.7 470.0L379.3 460.2L381.3 452.3Z" fill="#9d9d9d"/>
<path d="M381.2 440.8L374.8 437.7L367.5 435.7L363.0 435.2L354.7 435.7L348.3 437.3L342.2 440.2L335.7 444.8L331.0 449.8L327.3 455.5L324.5 462.5L323.2 469.0L323.0 475.8L324.2 483.0L327.0 490.5L330.2 495.7L334.7 500.8L345.3 497.7L353.0 493.5L359.7 488.2L364.2 483.7L369.2 477.7L375.5 467.8L379.7 458.2L381.2 451.2L381.5 442.8Z" fill="#9f9f9f"/>
<path d="M381.2 440.8L374.8 437.7L367.5 435.7L363.0 435.2L354.7 435.7L348.3 437.3L342.2 440.2L335.7 444.8L331.0 449.8L327.3 455.5L324.5 462.5L323.2 469.0L323.0 475.8L324.0 482.3L326.0 488.3L329.3 494.5L334.3 500.5L345.3 497.3L352.2 493.7L359.2 488.2L367.8 478.8L374.7 468.7L379.0 459.2L380.8 451.3Z" fill="#a1a1a1"/>
<path d="M380.7 440.5L374.8 437.7L367.5 435.7L363.0 435.2L354.7 435.7L348.3 437.3L342.2 440.2L335.7 444.8L331.0 449.8L327.3 455.5L324.5 462.5L323.2 469.0L323.0 475.8L324.0 482.3L326.0 488.3L329.3 494.5L334.0 500.2L344.0 497.5L350.5 494.3L358.7 488.2L367.7 478.5L373.5 470.0L378.3 460.0L380.5 451.5Z" fill="#a3a3a3"/>
<path d="M380.3 440.3L374.8 437.7L367.5 435.7L363.0 435.2L354.7 435.7L348.3 437.3L342.2 440.2L335.7 444.8L331.0 449.8L327.3 455.5L324.5 462.5L323.2 469.0L323.0 475.8L324.0 482.3L326.0 488.3L329.3 494.5L333.8 500.0L344.0 497.2L350.7 493.8L358.3 488.0L367.5 478.2L373.5 469.3L378.2 459.5L380.2 451.7Z" fill="#a5a5a5"/>
<path d="M380.0 440.2L374.8 437.7L367.5 435.7L363.0 435.2L354.7 435.7L348.3 437.3L342.2 440.2L335.7 444.8L331.0 449.8L327.3 455.5L324.5 462.5L323.2 469.0L323.0 475.8L324.0 482.3L326.0 488.3L329.3 494.5L333.5 499.7L344.0 496.8L350.3 493.7L354.8 490.5L360.0 486.0L367.3 477.8L373.5 468.7L378.0 459.0L380.0 450.3Z" fill="#a7a7a7"/>
<path d="M374.8 437.7L366.5 435.5L359.2 435.2L353.0 436.0L346.2 438.2L340.5 441.2L335.7 444.8L331.0 449.8L327.3 455.5L324.5 462.5L323.2 469.0L323.0 475.8L324.0 482.3L326.0 488.3L329.3 494.5L333.2 499.3L344.0 496.5L350.5 493.2L359.5 486.0L366.5 478.3L373.0 468.8L377.3 459.8L378.8 455.2L379.7 450.5L379.8 440.2Z" fill="#a9a9a9"/>
<path d="M379.5 439.8L374.8 437.7L366.5 435.5L359.2 435.2L353.0 436.0L346.2 438.2L340.5 441.2L335.7 444.8L331.0 449.8L327.3 455.5L324.5 462.5L323.2 469.0L323.0 475.8L324.0 482.3L326.0 488.3L329.3 494.5L333.0 499.0L343.5 496.3L349.3 493.5L353.5 490.7L359.0 486.0L366.8 477.3L372.5 469.0L377.2 459.3L379.3 450.7Z" fill="#ababab"/>
<path d="M379.2 439.7L371.8 436.7L366.5 435.5L359.2 435.2L353.0 436.0L346.2 438.2L340.5 441.2L335.7 444.8L331.0 449.8L327.3 455.5L324.5 462.5L323.2 469.0L323.0 475.8L324.0 482.3L326.0 488.3L329.3 494.5L332.7 498.7L343.5 496.0L349.5 493.0L358.5 486.0L366.7 477.0L372.5 468.3L377.2 458.3L379.0 450.7Z" fill="#adadad"/>
<path d="M378.5 439.3L371.8 436.7L366.5 435.5L359.2 435.2L353.0 436.0L346.2 438.2L340.5 441.2L335.7 444.8L331.0 449.8L327.3 455.5L324.5 462.5L323.2 469.0L323.0 475.8L324.0 482.3L326.0 488.3L329.3 494.5L332.5 498.5L343.0 495.8L349.7 492.5L358.2 485.8L365.8 477.5L372.7 467.3L375.3 462.0L377.5 456.2L378.8 449.0Z" fill="#afafaf"/>
<path d="M378.2 439.2L371.8 436.7L366.5 435.5L359.2 435.2L353.0 436.0L346.2 438.2L340.5 441.2L335.7 444.8L331.0 449.8L327.3 455.5L324.5 462.5L323.2 469.0L323.0 475.8L324.0 482.3L326.0 488.3L329.3 494.5L332.2 498.2L342.5 495.7L349.0 492.5L357.7 485.8L366.2 476.5L373.0 466.0L377.0 456.7L378.5 449.2Z" fill="#b1b1b1"/>
<path d="M377.8 439.0L371.8 436.7L365.2 435.3L359.2 435.2L353.0 436.0L346.2 438.2L340.5 441.2L335.7 444.8L331.0 449.8L327.3 455.5L324.5 462.5L323.2 469.0L323.0 475.8L324.0 482.3L326.0 488.3L328.5 493.2L331.8 497.8L342.0 495.5L349.2 492.0L357.5 485.5L365.3 477.0L372.3 466.5L375.2 460.7L377.0 455.5L378.2 449.3Z" fill="#b3b3b3"/>
<path d="M377.5 438.8L370.7 436.3L365.2 435.3L359.2 435.2L353.0 436.0L346.2 438.2L340.5 441.2L335.7 444.8L331.0 449.8L327.3 455.5L324.5 462.5L323.2 469.0L323.0 475.8L323.7 480.8L325.3 486.7L328.0 492.3L331.7 497.5L340.3 495.7L344.8 494.0L348.5 492.0L357.2 485.3L365.7 476.0L371.8 466.7L376.3 456.5L377.8 449.3Z" fill="#b5b5b5"/>
<path d="M377.2 438.7L370.7 436.3L365.2 435.3L359.2 435.2L353.0 436.0L346.2 438.2L340.5 441.2L335.7 444.8L331.0 449.8L327.3 455.5L324.5 462.5L323.2 469.0L323.0 475.8L323.7 480.8L325.3 486.7L328.0 492.3L331.3 497.2L340.3 495.3L344.0 494.0L348.7 491.5L356.8 485.2L364.8 476.5L372.2 465.3L376.3 455.3L377.5 449.3Z" fill="#b7b7b7"/>
<path d="M376.8 438.5L370.7 436.3L365.2 435.3L359.2 435.2L353.0 436.0L346.2 438.2L340.5 441.2L335.7 444.8L331.0 449.8L327.3 455.5L324.5 462.5L323.2 469.0L323.0 475.8L323.7 480.8L325.3 486.7L328.0 492.3L331.2 496.8L340.8 494.8L348.0 491.5L356.7 484.8L364.5 476.3L370.8 467.0L375.5 456.8L377.2 449.3Z" fill="#b9b9b9"/>
<path d="M376.3 438.3L370.0 436.2L363.0 435.2L357.2 435.3L351.0 436.5L346.2 438.2L340.5 441.2L335.7 444.8L331.0 449.8L328.2 454.0L325.3 460.0L323.8 465.0L323.0 470.8L323.2 477.7L324.5 484.2L327.0 490.5L330.8 496.5L341.3 494.3L348.7 490.7L356.5 484.5L364.8 475.3L371.2 465.7L375.5 455.7L376.8 449.3Z" fill="#bbbbbb"/>
<path d="M376.0 438.2L370.0 436.2L363.0 435.2L357.2 435.3L351.0 436.5L346.2 438.2L340.5 441.2L335.7 444.8L331.0 449.8L328.2 454.0L325.3 460.0L323.8 465.0L323.0 470.8L323.2 477.7L324.5 484.2L327.0 490.5L330.7 496.2L340.2 494.3L348.0 490.7L356.3 484.2L364.5 475.2L368.2 470.0L371.8 463.7L375.3 455.0L376.5 449.2Z" fill="#bdbdbd"/>
<path d="M375.7 438.0L370.0 436.2L363.0 435.2L357.2 435.3L351.0 436.5L346.2 438.2L340.5 441.2L335.7 444.8L331.0 449.8L328.2 454.0L325.3 460.0L323.8 465.0L323.0 470.8L323.2 477.7L324.5 484.2L327.0 490.5L330.3 495.8L340.2 494.0L347.3 490.7L356.2 483.8L364.2 475.0L371.2 464.2L375.0 454.8L376.2 449.2Z" fill="#bfbfbf"/>
<path d="M375.2 437.8L370.0 436.2L363.0 435.2L357.2 435.3L351.0 436.5L346.2 438.2L340.5 441.2L335.7 444.8L331.0 449.8L328.2 454.0L325.3 460.0L323.8 465.0L323.0 470.8L323.2 477.7L324.5 484.2L327.0 490.5L330.2 495.5L339.5 493.8L347.2 490.3L356.2 483.3L363.3 475.5L369.7 466.2L374.3 455.8L375.8 449.0L375.8 443.7Z" fill="#c1c1c1"/>
<path d="M374.8 437.7L370.0 436.2L363.0 435.2L357.2 435.3L351.0 436.5L346.2 438.2L340.5 441.2L335.7 444.8L331.0 449.8L328.2 454.0L325.3 460.0L323.8 465.0L323.0 470.8L323.2 477.7L324.2 483.0L327.0 490.5L329.8 495.2L340.0 493.3L346.5 490.3L354.2 484.7L363.0 475.3L370.2 464.5L374.2 455.2L375.5 448.8Z" fill="#c3c3c3"/>
<path d="M374.3 437.5L370.0 436.2L363.0 435.2L357.2 435.3L351.0 436.5L346.2 438.2L340.5 441.2L335.7 444.8L331.0 449.8L328.2 454.0L325.3 460.0L323.8 465.0L323.0 470.8L323.2 477.7L324.2 483.0L327.0 490.5L329.7 494.8L339.3 493.2L347.2 489.5L356.3 482.2L363.2 474.5L369.7 464.7L374.0 454.5L375.2 448.7L375.2 443.8Z" fill="#c5c5c5"/>
<path d="M374.2 437.5L370.0 436.2L363.0 435.2L357.2 435.3L351.0 436.5L346.2 438.2L340.5 441.2L335.7 444.8L331.0 449.8L328.2 454.0L325.3 460.0L323.8 465.0L323.0 470.8L323.2 477.7L324.2 483.0L326.0 488.3L329.3 494.5L338.7 493.0L342.0 491.8L347.0 489.2L354.0 483.8L362.8 474.3L369.3 464.5L373.7 454.3L374.8 448.5Z" fill="#c7c7c7"/>
<path d="M373.8 437.3L370.0 436.2L363.0 435.2L355.8 435.5L349.8 436.8L344.0 439.2L339.5 441.8L335.7 444.8L331.0 449.8L328.2 454.0L325.3 460.0L323.8 465.0L323.0 470.8L323.2 477.7L324.2 483.0L326.0 488.3L329.2 494.2L339.2 492.5L345.5 489.7L354.0 483.3L362.5 474.2L369.0 464.3L373.3 454.2L374.5 448.3Z" fill="#c9c9c9"/>
<path d="M373.3 437.2L367.5 435.7L363.0 435.2L355.8 435.5L349.8 436.8L344.0 439.2L339.5 441.8L335.7 444.8L331.0 449.8L328.2 454.0L325.3 460.0L323.8 465.0L323.0 470.8L323.2 477.7L324.2 483.0L326.0 488.3L329.0 493.8L337.8 492.5L345.3 489.3L354.0 482.8L362.2 474.0L368.7 464.2L373.0 454.0L374.2 448.0Z" fill="#cbcbcb"/>
<path d="M372.8 437.0L367.5 435.7L363.0 435.2L355.8 435.5L349.8 436.8L344.0 439.2L339.5 441.8L335.7 444.8L331.0 449.8L328.2 454.0L325.3 460.0L323.8 465.0L323.0 470.8L323.2 477.7L324.2 483.0L326.0 488.3L328.7 493.3L338.3 492.0L345.2 489.0L354.0 482.3L361.2 474.7L368.3 464.0L372.7 453.8L373.8 447.7L373.8 444.3Z" fill="#cdcdcd"/>
<path d="M372.3 436.8L363.0 435.2L355.8 435.5L349.8 436.8L344.0 439.2L339.5 441.8L335.7 444.8L331.0 449.8L328.2 454.0L325.3 460.0L323.8 465.0L323.0 470.8L323.0 475.8L324.0 482.3L326.0 488.3L328.5 493.0L338.2 491.7L345.0 488.7L349.7 485.5L354.2 481.7L362.0 473.0L368.0 463.8L372.3 453.7L373.5 447.3L373.3 442.8Z" fill="#cfcfcf"/>
<path d="M372.2 436.8L367.5 435.7L363.0 435.2L355.8 435.5L349.8 436.8L344.0 439.2L339.5 441.8L335.7 444.8L331.0 449.8L328.2 454.0L325.3 460.0L323.8 465.0L323.0 470.8L323.0 475.8L324.0 482.3L326.0 488.3L328.3 492.7L338.0 491.3L344.8 488.3L352.5 482.7L361.0 473.7L367.7 463.7L371.8 454.0L373.2 446.8Z" fill="#d1d1d1"/>
<path d="M371.7 436.7L365.2 435.3L359.2 435.2L349.8 436.8L344.0 439.2L339.5 441.8L335.7 444.8L331.0 449.8L328.2 454.0L325.3 460.0L323.8 465.0L323.0 470.8L323.0 475.8L324.0 482.3L325.3 486.7L328.0 492.3L338.5 490.8L344.7 488.0L352.5 482.2L361.2 472.8L367.5 463.2L371.5 453.8L372.7 448.5L372.7 443.2Z" fill="#d3d3d3"/>
<path d="M371.2 436.5L365.2 435.3L359.2 435.2L349.8 436.8L344.0 439.2L339.5 441.8L335.7 444.8L331.0 449.8L328.2 454.0L325.3 460.0L323.8 465.0L323.0 470.8L323.0 475.8L324.0 482.3L326.0 488.3L327.8 491.8L336.3 491.0L340.2 489.8L344.2 487.8L352.7 481.5L361.3 472.0L367.2 463.0L371.3 453.0L372.3 448.2L372.3 443.3Z" fill="#d5d5d5"/>
<path d="M370.7 436.3L365.2 435.3L359.2 435.2L354.7 435.7L348.3 437.3L344.0 439.2L338.3 442.7L335.7 444.8L331.0 449.8L328.2 454.0L325.3 460.0L323.8 465.0L323.0 470.8L323.0 475.8L324.0 482.3L325.3 486.7L327.7 491.5L336.2 490.7L340.0 489.5L344.0 487.5L352.8 480.8L360.3 472.7L367.0 462.5L371.0 452.8L372.0 447.7L372.0 443.7Z" fill="#d6d6d6"/>
<path d="M370.3 436.3L365.2 435.3L359.2 435.2L354.7 435.7L348.3 437.3L344.0 439.2L338.3 442.7L335.7 444.8L331.0 449.8L328.2 454.0L325.3 460.0L323.8 465.0L323.0 470.8L323.0 475.8L323.7 480.8L325.3 486.7L327.5 491.2L336.0 490.3L340.2 489.0L343.8 487.2L351.3 481.7L359.8 472.7L366.0 463.5L368.7 458.2L370.5 453.2L371.5 448.7L371.7 444.0Z" fill="#d8d8d8"/>
<path d="M370.0 436.2L365.2 435.3L359.2 435.2L354.7 435.7L348.3 437.3L344.0 439.2L338.3 442.7L335.7 444.8L331.0 449.8L328.2 454.0L326.0 458.3L324.2 463.7L323.2 469.0L323.0 475.8L323.7 480.8L325.3 486.7L327.2 490.7L335.8 490.0L339.2 489.0L343.3 487.0L351.5 481.0L360.0 471.8L365.8 463.0L368.7 457.2L370.3 452.3L371.2 448.3L371.3 444.7Z" fill="#dadada"/>
<path d="M369.5 436.2L365.2 435.3L359.2 435.2L354.7 435.7L348.3 437.3L344.0 439.2L338.3 442.7L335.7 444.8L331.0 449.8L328.2 454.0L326.0 458.3L324.2 463.7L323.2 469.0L323.0 475.8L323.7 480.8L325.3 486.7L327.0 490.3L336.3 489.5L342.8 486.8L346.5 484.5L351.8 480.2L359.5 471.8L365.7 462.5L369.8 452.7L370.8 447.8L370.8 443.2Z" fill="#dcdcdc"/>
<path d="M369.0 436.0L365.2 435.3L359.2 435.2L354.7 435.7L348.3 437.3L344.0 439.2L338.3 442.7L335.7 444.8L331.0 449.8L328.2 454.0L326.0 458.3L324.2 463.7L323.2 469.0L323.0 475.8L323.7 480.8L325.3 486.7L326.8 490.0L336.0 489.2L342.3 486.7L350.5 480.8L359.0 471.8L365.5 462.0L369.7 451.8L370.5 447.3L370.5 443.5Z" fill="#dedede"/>
<path d="M368.7 436.0L365.2 435.3L359.2 435.2L354.7 435.7L348.3 437.3L344.0 439.2L338.3 442.7L335.7 444.8L331.0 449.8L328.2 454.0L326.0 458.3L324.2 463.7L323.2 469.0L323.0 475.8L323.7 480.8L325.3 486.7L326.7 489.5L335.8 488.8L343.0 485.8L350.8 480.0L359.0 471.2L362.7 466.0L365.8 460.5L369.3 451.5L370.2 444.2Z" fill="#e0e0e0"/>
<path d="M368.2 435.8L363.0 435.2L357.2 435.3L353.0 436.0L347.0 437.8L342.2 440.2L335.7 444.8L331.0 449.8L328.2 454.0L326.0 458.3L324.2 463.7L323.2 469.0L323.3 478.8L324.5 484.2L326.5 489.2L335.5 488.5L342.2 485.8L349.7 480.5L354.7 475.7L358.5 471.2L364.7 461.8L368.8 451.8L369.7 447.7L369.7 443.0Z" fill="#e2e2e2"/>
<path d="M367.5 435.7L363.0 435.2L357.2 435.3L353.0 436.0L347.0 437.8L342.2 440.2L335.7 444.8L331.0 449.8L328.2 454.0L326.0 458.3L324.2 463.7L323.2 469.0L323.3 478.8L324.5 484.2L326.2 488.7L335.2 488.2L341.3 485.8L345.8 483.0L350.0 479.7L358.5 470.5L364.8 460.7L368.5 451.5L369.3 447.0L369.3 443.5Z" fill="#e4e4e4"/>
<path d="M367.2 435.7L363.0 435.2L357.2 435.3L353.0 436.0L347.0 437.8L342.2 440.2L335.7 444.8L331.0 449.8L328.2 454.0L326.0 458.3L324.2 463.7L323.2 469.0L323.3 478.8L324.2 483.0L326.0 488.2L333.8 488.0L338.2 486.8L342.0 485.0L345.8 482.5L350.7 478.5L357.3 471.3L363.8 461.7L366.3 456.5L368.2 451.2L369.0 444.3Z" fill="#e6e6e6"/>
<path d="M366.5 435.5L363.0 435.2L355.8 435.5L351.0 436.5L346.2 438.2L342.2 440.2L337.7 443.2L331.0 449.8L328.2 454.0L326.0 458.3L324.2 463.7L323.2 469.0L323.2 477.7L324.2 483.0L325.8 487.8L335.2 487.3L342.0 484.5L349.7 478.8L357.8 470.0L363.2 462.0L365.7 457.0L367.5 452.0L368.5 447.0L368.5 443.2Z" fill="#e8e8e8"/>
<path d="M366.2 435.5L363.0 435.2L355.8 435.5L351.0 436.5L346.2 438.2L342.2 440.2L337.7 443.2L331.0 449.8L328.2 454.0L326.0 458.3L324.2 463.7L323.2 469.0L323.2 477.7L324.2 483.0L325.7 487.3L334.7 487.0L340.8 484.7L348.8 479.0L357.2 470.2L363.5 460.5L367.3 451.0L368.2 444.3Z" fill="#eaeaea"/>
<path d="M365.7 435.5L363.0 435.2L355.8 435.5L351.0 436.5L346.2 438.2L342.2 440.2L337.7 443.2L331.0 449.8L326.5 457.2L324.5 462.5L323.5 466.7L323.0 470.8L323.2 477.7L324.2 483.0L325.5 486.8L334.2 486.7L340.8 484.2L345.0 481.5L349.7 477.7L357.0 469.7L363.0 460.5L365.0 456.3L367.0 450.5L367.7 446.7L367.7 443.3Z" fill="#ececec"/>
<path d="M365.2 435.3L359.2 435.2L354.7 435.7L346.2 438.2L342.2 440.2L337.7 443.2L331.0 449.8L326.5 457.2L324.5 462.5L323.5 466.7L323.0 470.8L323.2 477.7L324.0 482.3L325.3 486.3L333.3 486.3L337.7 485.2L340.5 483.8L349.0 477.7L356.2 470.0L361.8 461.7L366.2 451.8L367.2 447.0L367.2 443.0Z" fill="#eeeeee"/>
<path d="M364.5 435.3L359.2 435.2L354.7 435.7L346.2 438.2L342.2 440.2L337.7 443.2L331.0 449.8L326.5 457.2L324.5 462.5L323.5 466.7L323.0 475.8L323.7 480.8L325.2 485.8L333.7 485.8L337.7 484.7L341.0 483.0L348.8 477.2L355.8 469.7L361.7 461.0L364.3 455.5L366.0 450.7L366.7 447.3L366.7 442.7Z" fill="#f0f0f0"/>
<path d="M364.0 435.3L359.2 435.2L354.7 435.7L346.2 438.2L342.2 440.2L337.7 443.2L331.0 449.8L326.5 457.2L324.5 462.5L323.5 466.7L323.0 475.8L323.7 480.8L325.0 485.3L333.7 485.3L340.0 483.0L347.3 477.8L355.3 469.5L361.8 459.7L365.3 451.2L366.2 447.3L366.2 442.7Z" fill="#f2f2f2"/>
<path d="M363.3 435.3L359.2 435.2L354.7 435.7L346.2 438.2L342.2 440.2L337.7 443.2L331.0 449.8L326.5 457.2L324.5 462.5L323.5 466.7L323.0 475.8L324.7 484.7L333.3 484.8L339.2 482.8L343.5 480.2L347.5 477.0L355.8 468.0L361.5 459.2L363.8 454.0L365.3 449.0L365.7 442.8Z" fill="#f4f4f4"/>
<path d="M362.7 435.2L357.2 435.3L353.0 436.0L344.0 439.2L336.8 443.8L331.0 449.8L326.5 457.2L324.5 462.5L323.5 466.7L323.0 475.8L324.5 484.0L333.0 484.3L339.5 482.0L347.0 476.7L350.7 473.2L355.5 467.5L360.7 459.5L363.3 453.7L364.7 449.3L365.2 443.5L364.5 440.2Z" fill="#f6f6f6"/>
<path d="M361.8 435.2L353.0 436.0L344.0 439.2L336.8 443.8L331.0 449.8L326.5 457.2L324.5 462.5L323.5 466.7L323.0 475.8L324.3 483.3L333.0 483.7L336.2 482.8L339.7 481.2L347.2 475.7L354.2 468.2L359.7 460.0L362.7 453.7L364.2 448.7L364.3 442.2Z" fill="#f8f8f8"/>
<path d="M361.0 435.2L353.0 436.0L344.0 439.2L336.8 443.8L331.0 449.8L326.5 457.2L323.8 465.0L323.0 470.8L323.0 475.8L324.0 482.3L332.5 483.0L336.7 481.8L339.7 480.3L344.7 476.8L350.5 471.3L353.5 467.8L359.0 459.7L361.7 454.2L363.3 449.0L363.8 445.5L363.7 442.7Z" fill="#fafafa"/>
<path d="M359.8 435.2L351.0 436.5L344.0 439.2L336.8 443.8L331.0 449.8L326.5 457.2L323.8 465.0L323.0 470.8L323.0 475.8L323.8 481.3L331.5 482.2L334.3 481.7L338.7 479.8L346.2 474.3L353.5 466.3L358.5 458.7L361.0 453.3L362.5 448.5L362.7 442.3Z" fill="#fcfcfc"/>
<path d="M358.2 435.3L351.0 436.5L344.0 439.2L336.8 443.8L331.0 449.8L326.5 457.2L324.2 463.7L323.0 470.8L323.5 479.7L331.0 480.8L336.3 479.5L339.7 477.7L344.3 474.2L352.3 465.7L356.0 460.3L359.0 454.7L361.3 447.3L361.2 441.8Z" fill="#ffffff"/>
<path d="M562.40 469.40a38.20 38.20 0 1 0 76.40 0a38.20 38.20 0 1 0 -76.40 0Z" shape-rendering="crispEdges" fill="#5f5f5f"/>
<path d="M605.8 431.5L598.7 431.2L590.3 432.5L584.8 434.5L577.5 438.8L572.8 443.0L567.7 449.8L564.7 456.2L562.7 464.2L562.5 473.0L563.7 479.3L566.0 485.7L569.7 491.8L575.5 498.2L580.5 501.8L587.3 505.2L594.3 507.0L600.2 505.3L608.2 501.8L614.5 498.0L620.0 493.7L626.7 486.7L631.3 480.0L635.0 472.8L638.2 463.8L637.3 459.2L635.5 454.0L633.2 449.5L628.7 443.5L624.2 439.3L619.2 436.0L613.3 433.3Z" fill="#616161"/>
<path d="M608.7 432.0L602.3 431.2L593.2 431.8L586.8 433.7L580.2 437.0L574.2 441.7L569.2 447.5L565.8 453.3L563.2 461.3L562.3 468.3L563.0 476.5L564.7 482.5L568.0 489.3L571.7 494.3L578.0 500.2L584.2 503.8L591.2 506.3L598.0 504.7L605.0 502.0L612.3 498.0L619.5 492.5L626.3 485.2L631.2 477.8L634.5 470.7L637.7 460.5L635.5 454.0L633.2 449.5L629.8 444.8L626.3 441.2L619.2 436.0L613.3 433.3Z" fill="#636363"/>
<path d="M611.8 432.8L604.5 431.3L596.5 431.3L590.3 432.5L581.8 436.0L575.8 440.2L570.7 445.5L567.0 451.0L563.8 458.7L562.5 465.7L562.5 473.0L564.0 480.5L566.8 487.3L570.8 493.3L576.5 499.0L582.5 503.0L589.3 505.8L597.2 504.0L604.8 501.2L611.3 497.7L617.5 493.2L623.3 487.5L627.2 482.7L632.5 473.3L634.8 467.2L637.0 458.0L635.5 454.0L631.5 447.0L628.7 443.5L622.8 438.3L619.2 436.0Z" fill="#656565"/>
<path d="M613.3 433.3L605.8 431.5L598.7 431.2L591.7 432.2L584.8 434.5L578.7 438.0L572.8 443.0L567.7 449.8L564.7 456.2L562.7 464.2L562.3 470.3L563.3 478.0L566.0 485.7L570.2 492.5L575.5 498.2L581.3 502.3L587.3 505.2L588.7 505.3L592.5 504.5L602.0 501.7L609.0 498.3L615.7 493.8L622.3 487.7L626.2 483.0L630.2 476.7L633.2 470.0L636.7 457.0L633.8 450.7L629.8 444.8L625.0 440.0L620.3 436.7Z" fill="#676767"/>
<path d="M613.3 433.3L605.8 431.5L598.7 431.2L591.7 432.2L584.8 434.5L578.7 438.0L572.8 443.0L567.7 449.8L564.7 456.2L562.7 464.2L562.3 470.3L563.3 478.0L566.0 485.7L570.2 492.5L575.5 498.2L580.5 501.8L586.5 504.8L594.8 503.3L601.3 501.3L606.3 499.2L613.0 495.2L617.8 491.3L624.3 484.5L629.0 477.7L632.3 470.7L634.2 465.0L636.2 456.0L633.8 450.7L629.8 444.8L625.0 440.0L620.3 436.7Z" fill="#696969"/>
<path d="M615.8 434.3L608.7 432.0L602.3 431.2L595.2 431.5L586.8 433.7L580.2 437.0L574.2 441.7L569.2 447.5L565.8 453.3L563.2 461.3L562.3 468.3L562.8 475.5L564.7 482.5L567.5 488.5L571.7 494.3L578.0 500.2L585.7 504.5L594.0 503.0L601.3 500.8L607.8 497.8L612.2 495.2L617.5 491.0L623.2 485.2L627.3 479.5L631.0 472.7L634.0 463.7L635.7 455.3L635.5 454.0L633.2 449.5L628.7 443.5L622.8 438.3Z" fill="#6b6b6b"/>
<path d="M615.8 434.3L608.7 432.0L602.3 431.2L595.2 431.5L586.8 433.7L580.2 437.0L574.2 441.7L569.2 447.5L565.8 453.3L563.2 461.3L562.3 468.3L562.8 475.5L564.7 482.5L567.5 488.5L571.7 494.3L577.3 499.7L585.0 504.2L598.0 501.5L603.5 499.5L609.8 496.2L615.7 492.0L620.7 487.3L626.2 480.5L630.0 473.8L633.2 465.2L635.3 453.7L631.5 447.0L626.3 441.2L620.3 436.7Z" fill="#6d6d6d"/>
<path d="M615.8 434.3L608.7 432.0L602.3 431.2L595.2 431.5L586.8 433.7L580.2 437.0L574.2 441.7L569.2 447.5L565.8 453.3L563.2 461.3L562.3 468.3L562.8 475.5L564.7 482.5L567.5 488.5L571.7 494.3L577.3 499.7L583.8 503.7L593.0 502.3L598.8 500.8L604.0 498.8L611.7 494.5L617.2 490.2L622.5 484.7L626.7 479.0L630.2 472.5L633.2 463.5L635.0 453.0L631.5 447.0L626.3 441.2L620.3 436.7Z" fill="#6f6f6f"/>
<path d="M619.2 436.0L611.8 432.8L604.5 431.3L596.5 431.3L590.3 432.5L584.8 434.5L577.5 438.8L571.5 444.5L567.0 451.0L563.8 458.7L562.5 465.7L562.5 473.0L564.0 480.5L566.8 487.3L570.8 493.3L576.5 499.0L582.5 503.0L583.8 503.3L596.3 501.2L602.3 499.2L608.3 496.2L614.8 491.7L620.8 486.0L624.5 481.5L627.8 476.3L630.3 471.2L632.2 465.8L634.5 452.0L631.5 447.0L628.7 443.5L624.2 439.3Z" fill="#717171"/>
<path d="M619.2 436.0L611.8 432.8L604.5 431.3L596.5 431.3L590.3 432.5L584.8 434.5L577.5 438.8L571.5 444.5L567.0 451.0L563.8 458.7L562.5 465.7L562.5 473.0L564.0 480.5L566.8 487.3L570.8 493.3L576.5 499.0L582.5 503.0L596.8 500.7L603.0 498.5L608.5 495.7L614.7 491.3L620.5 485.8L624.7 480.7L627.3 476.5L630.2 470.7L632.0 465.2L634.2 451.3L631.5 447.0L628.7 443.5L624.2 439.3Z" fill="#737373"/>
<path d="M619.2 436.0L611.8 432.8L604.5 431.3L596.5 431.3L590.3 432.5L584.8 434.5L577.5 438.8L571.5 444.5L567.0 451.0L563.8 458.7L562.7 464.2L562.5 473.0L563.7 479.3L566.0 485.7L570.2 492.5L575.5 498.2L582.2 502.7L590.3 501.7L596.8 500.3L602.5 498.3L607.8 495.7L614.3 491.2L620.3 485.5L624.0 481.0L627.5 475.5L631.3 466.3L632.8 459.3L633.8 450.7L628.7 443.5L624.2 439.3Z" fill="#757575"/>
<path d="M620.3 436.7L613.3 433.3L605.8 431.5L598.7 431.2L591.7 432.2L584.8 434.5L577.5 438.8L572.8 443.0L567.7 449.8L564.7 456.2L562.7 464.2L562.3 470.3L563.3 478.0L566.0 485.7L569.7 491.8L575.5 498.2L581.5 502.3L594.8 500.5L600.8 498.7L607.2 495.7L611.8 492.7L616.2 489.2L621.5 483.7L626.2 477.2L629.2 471.3L631.2 465.7L632.5 459.3L633.5 450.2L628.7 443.5L625.0 440.0Z" fill="#777777"/>
<path d="M620.3 436.7L613.3 433.3L605.8 431.5L598.7 431.2L591.7 432.2L584.8 434.5L577.5 438.8L572.8 443.0L567.7 449.8L564.7 456.2L562.7 464.2L562.3 470.3L563.3 478.0L566.0 485.7L569.7 491.8L575.5 498.2L580.5 501.8L594.2 500.3L600.8 498.3L606.5 495.7L611.5 492.5L615.7 489.2L620.5 484.3L625.7 477.3L628.8 471.3L631.0 465.2L632.2 459.3L633.2 449.5L628.7 443.5L625.0 440.0Z" fill="#797979"/>
<path d="M620.3 436.7L613.3 433.3L605.8 431.5L598.7 431.2L591.7 432.2L584.8 434.5L577.5 438.8L572.8 443.0L567.7 449.8L564.7 456.2L562.7 464.2L562.3 470.3L563.3 478.0L566.0 485.7L569.7 491.8L575.5 498.2L580.0 501.5L589.2 500.8L595.0 499.8L600.8 498.0L606.2 495.5L612.3 491.5L616.7 487.8L620.5 483.8L625.0 477.8L628.5 471.3L630.5 465.8L631.8 459.5L632.8 449.0L629.8 444.8L626.3 441.2Z" fill="#7b7b7b"/>
<path d="M620.3 436.7L613.3 433.3L605.8 431.5L598.7 431.2L591.7 432.2L584.8 434.5L578.7 438.0L572.8 443.0L568.5 448.5L565.3 454.5L563.0 462.2L562.3 468.3L563.0 476.5L565.3 484.2L569.7 491.8L575.5 498.2L579.5 501.2L589.3 500.5L594.3 499.7L600.0 498.0L605.8 495.3L610.2 492.7L615.7 488.3L620.7 483.2L624.8 477.5L628.2 471.3L630.3 465.3L631.7 458.5L632.5 448.5L629.8 444.8L626.3 441.2Z" fill="#7d7d7d"/>
<path d="M622.8 438.3L615.8 434.3L608.7 432.0L602.3 431.2L593.2 431.8L586.8 433.7L580.2 437.0L574.2 441.7L569.2 447.5L565.8 453.3L563.2 461.3L562.3 468.3L563.0 476.5L564.7 482.5L568.0 489.3L571.7 494.3L579.0 500.8L591.0 500.0L596.5 498.8L602.8 496.5L608.3 493.5L613.8 489.5L619.8 483.7L623.0 479.7L626.2 474.7L629.8 466.0L631.2 460.0L632.2 448.0L628.7 443.5Z" fill="#7f7f7f"/>
<path d="M622.8 438.3L615.8 434.3L608.7 432.0L602.3 431.2L593.2 431.8L586.8 433.7L580.2 437.0L574.2 441.7L569.2 447.5L565.8 453.3L563.2 461.3L562.3 468.3L563.0 476.5L564.7 482.5L568.0 489.3L571.7 494.3L578.0 500.2L580.0 500.5L592.3 499.5L597.2 498.3L602.5 496.3L607.5 493.7L613.2 489.7L618.7 484.5L622.5 479.8L626.0 474.3L629.2 467.2L631.0 459.2L631.7 447.3L629.8 444.8L626.3 441.2Z" fill="#818181"/>
<path d="M622.8 438.3L615.8 434.3L608.7 432.0L602.3 431.2L593.2 431.8L586.8 433.7L580.2 437.0L574.2 441.7L569.2 447.5L565.8 453.3L563.2 461.3L562.3 468.3L563.0 476.5L564.7 482.5L568.0 489.3L571.7 494.3L578.0 500.2L592.5 499.2L597.3 498.0L602.5 496.0L608.0 493.0L613.5 489.0L619.2 483.5L622.5 479.3L625.7 474.3L629.3 465.7L630.8 458.2L631.3 446.8L626.3 441.2Z" fill="#838383"/>
<path d="M624.2 439.3L619.2 436.0L611.8 432.8L604.5 431.3L596.5 431.3L590.3 432.5L581.8 436.0L575.8 440.2L570.7 445.5L567.0 451.0L563.8 458.7L562.5 465.7L562.5 473.0L564.0 480.5L566.8 487.3L571.7 494.3L577.3 499.7L590.8 499.2L596.3 498.0L602.2 495.8L611.3 490.3L615.7 486.7L621.0 480.8L624.7 475.5L627.7 469.5L629.7 463.3L630.7 457.0L631.0 446.3L628.7 443.5Z" fill="#868686"/>
<path d="M624.2 439.3L619.2 436.0L611.8 432.8L604.5 431.3L596.5 431.3L590.3 432.5L581.8 436.0L575.8 440.2L570.7 445.5L567.0 451.0L563.8 458.7L562.5 465.7L562.5 473.0L564.0 480.5L566.8 487.3L570.8 493.3L577.2 499.5L590.0 499.0L595.8 497.8L600.7 496.2L606.3 493.3L611.5 489.8L614.5 487.3L621.0 480.3L625.0 474.3L627.5 469.2L629.5 462.8L630.3 457.5L630.7 446.0L628.7 443.5Z" fill="#888888"/>
<path d="M625.0 440.0L619.2 436.0L611.8 432.8L604.5 431.3L596.5 431.3L590.3 432.5L581.8 436.0L575.8 440.2L571.5 444.5L567.0 451.0L563.8 458.7L562.5 465.7L562.5 473.0L564.0 480.5L566.8 487.3L570.2 492.5L575.5 498.2L576.8 499.2L586.8 499.0L592.5 498.3L597.7 497.0L605.2 493.7L609.2 491.2L613.7 487.7L618.8 482.5L623.7 476.0L626.8 470.0L628.5 465.5L629.8 459.5L630.3 445.5Z" fill="#8a8a8a"/>
<path d="M625.0 440.0L619.2 436.0L611.8 432.8L604.5 431.3L596.5 431.3L590.3 432.5L581.8 436.0L575.8 440.2L571.5 444.5L567.0 451.0L563.8 458.7L562.5 465.7L562.5 473.0L564.0 480.5L566.8 487.3L570.2 492.5L576.3 498.8L589.7 498.5L595.0 497.5L600.0 495.8L604.8 493.5L609.8 490.3L614.3 486.7L619.0 481.8L622.7 477.0L626.7 469.7L628.5 464.5L629.5 459.8L630.0 445.2Z" fill="#8c8c8c"/>
<path d="M625.0 440.0L619.2 436.0L611.8 432.8L604.5 431.3L596.5 431.3L590.3 432.5L581.8 436.0L575.8 440.2L571.5 444.5L567.0 451.0L563.8 458.7L562.5 465.7L562.5 473.0L564.0 480.5L566.8 487.3L570.2 492.5L576.0 498.5L588.7 498.3L593.8 497.5L598.3 496.2L604.8 493.2L608.8 490.7L613.5 487.0L618.3 482.2L621.5 478.2L625.5 471.5L628.2 464.7L629.3 459.2L629.7 444.7Z" fill="#8e8e8e"/>
<path d="M625.0 440.0L619.2 436.0L611.8 432.8L604.5 431.3L596.5 431.3L590.3 432.5L581.8 436.0L575.8 440.2L571.5 444.5L567.0 451.0L563.8 458.7L562.5 465.7L562.5 473.0L564.0 480.5L566.8 487.3L570.2 492.5L575.5 498.2L589.2 498.0L593.3 497.3L598.8 495.7L604.8 492.8L609.5 489.8L614.2 486.0L618.5 481.5L622.5 476.2L625.5 470.8L627.8 464.8L629.0 459.5L629.3 444.3Z" fill="#909090"/>
<path d="M626.3 441.2L620.3 436.7L613.3 433.3L605.8 431.5L598.7 431.2L591.7 432.2L584.8 434.5L578.7 438.0L572.8 443.0L567.7 449.8L564.7 456.2L562.7 464.2L562.3 470.3L563.3 478.0L566.0 485.7L570.2 492.5L575.2 497.8L588.2 497.8L593.5 497.0L598.0 495.7L604.5 492.7L608.5 490.2L613.2 486.5L617.7 482.0L621.3 477.3L624.5 472.2L626.7 467.3L628.2 462.5L629.2 454.7L628.8 443.8Z" fill="#929292"/>
<path d="M626.3 441.2L620.3 436.7L613.3 433.3L605.8 431.5L598.7 431.2L591.7 432.2L584.8 434.5L578.7 438.0L572.8 443.0L567.7 449.8L564.7 456.2L562.7 464.2L562.3 470.3L563.3 478.0L566.0 485.7L569.7 491.8L574.7 497.3L586.7 497.7L591.3 497.2L597.2 495.7L606.2 491.3L611.5 487.5L616.5 482.8L620.5 478.0L624.3 471.8L626.5 467.0L628.0 462.0L628.8 456.2L628.5 443.3Z" fill="#949494"/>
<path d="M626.3 441.2L620.3 436.7L613.3 433.3L605.8 431.5L598.7 431.2L591.7 432.2L584.8 434.5L578.7 438.0L572.8 443.0L567.7 449.8L564.7 456.2L562.7 464.2L562.3 470.3L563.3 478.0L566.0 485.7L569.7 491.8L574.3 497.0L587.8 497.3L592.5 496.7L598.2 495.0L604.2 492.2L608.2 489.7L613.2 485.7L616.8 482.0L620.8 477.0L624.0 471.8L626.2 467.0L627.7 462.2L628.5 457.0L628.2 443.0Z" fill="#969696"/>
<path d="M626.3 441.2L620.3 436.7L613.3 433.3L605.8 431.5L598.7 431.2L591.7 432.2L584.8 434.5L578.7 438.0L572.8 443.0L567.7 449.8L564.7 456.2L562.7 464.2L562.3 470.3L563.0 476.5L565.3 484.2L569.7 491.8L574.0 496.7L585.8 497.2L591.0 496.7L595.8 495.5L599.8 494.0L605.8 490.8L610.3 487.7L615.0 483.5L618.8 479.2L623.0 473.0L625.3 468.3L627.2 463.0L628.2 457.7L628.3 451.3L627.8 442.7Z" fill="#989898"/>
<path d="M626.3 441.2L620.3 436.7L613.3 433.3L605.8 431.5L598.7 431.2L591.7 432.2L584.8 434.5L578.7 438.0L572.8 443.0L567.7 449.8L564.7 456.2L562.7 464.2L562.3 470.3L563.0 476.5L565.3 484.2L569.7 491.8L573.7 496.3L587.2 496.8L592.2 496.2L597.8 494.5L603.8 491.7L608.5 488.7L616.0 482.0L619.8 477.3L622.7 473.0L625.0 468.3L626.8 463.2L628.0 456.5L628.0 450.2L627.5 442.7Z" fill="#9a9a9a"/>
<path d="M620.3 436.7L613.3 433.3L605.8 431.5L598.7 431.2L591.7 432.2L586.0 434.0L580.2 437.0L574.2 441.7L569.2 447.5L565.8 453.3L563.2 461.3L562.3 468.3L562.8 475.5L564.7 482.5L567.5 488.5L571.7 494.3L573.2 495.8L581.0 496.5L588.0 496.5L592.3 495.8L597.8 494.2L603.5 491.5L612.3 485.2L617.3 480.0L621.5 474.3L623.8 470.2L626.3 463.8L627.3 459.7L627.8 454.7L627.0 441.8Z" fill="#9c9c9c"/>
<path d="M626.3 441.2L620.3 436.7L613.3 433.3L605.8 431.5L598.7 431.2L591.7 432.2L586.0 434.0L580.2 437.0L574.2 441.7L569.2 447.5L565.8 453.3L563.2 461.3L562.3 468.3L562.8 475.5L564.7 482.5L567.5 488.5L571.7 494.3L572.8 495.5L582.8 496.3L588.7 496.2L593.8 495.2L599.5 493.2L604.3 490.7L609.7 487.0L614.0 483.2L617.5 479.3L621.3 474.0L624.5 468.0L626.2 463.3L627.5 456.0L627.3 448.8Z" fill="#9e9e9e"/>
<path d="M625.0 440.0L620.3 436.7L613.3 433.3L605.8 431.5L598.7 431.2L591.7 432.2L584.8 434.5L578.7 438.0L572.8 443.0L568.5 448.5L565.3 454.5L563.2 461.3L562.3 468.3L562.8 475.5L564.7 482.5L568.0 489.3L572.5 495.2L581.7 496.0L587.5 496.0L594.0 494.8L599.5 492.8L604.8 490.0L610.2 486.2L615.2 481.5L619.2 476.7L622.2 472.0L625.2 465.5L626.5 460.8L627.2 456.7L627.2 450.0L626.3 441.5Z" fill="#a0a0a0"/>
<path d="M620.3 436.7L613.3 433.3L605.8 431.5L598.7 431.2L591.7 432.2L584.8 434.5L578.7 438.0L572.8 443.0L568.5 448.5L565.3 454.5L563.2 461.3L562.3 468.3L562.8 475.5L564.7 482.5L568.0 489.3L572.0 494.7L585.5 495.8L590.5 495.3L595.2 494.2L599.8 492.3L604.5 489.8L609.7 486.2L615.5 480.7L619.0 476.3L622.2 471.3L624.8 465.5L626.3 460.3L627.0 451.7L625.8 440.8Z" fill="#a2a2a2"/>
<path d="M620.3 436.7L613.3 433.3L605.8 431.5L598.7 431.2L591.7 432.2L584.8 434.5L578.7 438.0L572.8 443.0L568.5 448.5L565.3 454.5L563.2 461.3L562.3 468.3L562.8 475.5L564.7 482.5L567.5 488.5L571.7 494.3L582.3 495.5L586.7 495.5L594.7 494.0L599.8 492.0L604.2 489.7L610.2 485.3L615.7 480.0L622.0 471.0L624.5 465.5L626.0 460.5L626.7 456.0L626.7 450.7L625.5 440.5Z" fill="#a4a4a4"/>
<path d="M625.0 440.0L620.3 436.7L613.3 433.3L605.8 431.5L598.7 431.2L591.7 432.2L586.0 434.0L580.2 437.0L574.2 441.7L569.2 447.5L565.8 453.3L563.8 458.7L562.5 465.7L562.5 473.0L564.0 480.5L566.8 487.3L570.8 493.3L572.0 494.0L581.5 495.2L587.3 495.2L593.0 494.2L597.5 492.7L602.7 490.2L608.8 486.0L612.8 482.5L617.8 476.8L620.7 472.7L623.5 467.2L625.2 462.5L626.3 456.5L626.3 450.0Z" fill="#a6a6a6"/>
<path d="M619.2 436.0L611.8 432.8L605.8 431.5L598.7 431.2L591.7 432.2L584.8 434.5L578.7 438.0L572.8 443.0L568.5 448.5L565.3 454.5L563.2 461.3L562.3 468.3L562.8 475.5L564.7 482.5L567.5 488.5L571.0 493.5L583.3 495.0L589.2 494.7L593.7 493.7L598.7 491.8L604.0 489.0L609.2 485.3L614.2 480.7L618.2 475.8L621.2 471.2L623.8 465.5L625.5 460.0L626.2 451.3L624.7 439.8Z" fill="#a8a8a8"/>
<path d="M624.2 439.3L619.2 436.0L611.8 432.8L605.8 431.5L598.7 431.2L591.7 432.2L586.0 434.0L580.2 437.0L574.2 441.7L569.2 447.5L565.8 453.3L563.8 458.7L562.5 465.7L562.5 473.0L563.7 479.3L566.0 485.7L570.2 492.5L571.2 493.2L582.2 494.7L586.5 494.7L591.2 494.0L596.2 492.5L601.3 490.2L606.7 486.8L611.2 483.2L616.3 477.7L620.0 472.5L622.7 467.5L624.3 463.2L625.7 457.3L625.8 450.5Z" fill="#aaaaaa"/>
<path d="M623.5 438.8L615.8 434.3L610.7 432.5L604.5 431.3L596.5 431.3L590.3 432.5L584.8 434.5L578.7 438.0L572.8 443.0L568.5 448.5L565.3 454.5L563.2 461.3L562.3 468.3L562.7 474.3L564.0 480.5L566.8 487.3L570.3 492.7L581.3 494.3L587.0 494.3L593.2 493.2L597.8 491.5L603.8 488.3L609.5 484.2L614.3 479.5L617.8 475.2L621.3 469.5L623.2 465.5L624.8 460.2L625.5 456.2L625.5 449.8Z" fill="#acacac"/>
<path d="M622.8 438.3L615.8 434.3L610.7 432.5L604.5 431.3L596.5 431.3L590.3 432.5L584.8 434.5L578.7 438.0L572.8 443.0L568.5 448.5L565.3 454.5L563.2 461.3L562.3 468.3L562.7 474.3L564.0 480.5L566.8 487.3L570.0 492.2L583.2 494.2L588.7 493.8L593.2 492.8L598.2 491.0L604.0 487.8L609.0 484.2L614.3 479.0L617.7 474.8L620.5 470.3L623.3 464.2L624.7 459.5L625.3 454.7L625.2 449.3L623.5 439.5Z" fill="#aeaeae"/>
<path d="M622.8 438.3L619.2 436.0L611.8 432.8L605.8 431.5L598.7 431.2L591.7 432.2L586.0 434.0L580.2 437.0L574.2 441.7L569.2 447.5L565.8 453.3L563.8 458.7L562.5 465.7L562.5 473.0L563.7 479.3L566.0 485.7L569.3 491.3L570.0 491.8L582.2 493.8L590.7 493.2L595.7 491.7L600.2 489.7L604.7 487.0L609.8 483.0L614.2 478.7L617.8 474.0L620.5 469.7L623.5 462.7L624.8 456.7L625.0 450.5Z" fill="#b0b0b0"/>
<path d="M622.3 438.0L615.8 434.3L610.7 432.5L604.5 431.3L596.5 431.3L590.3 432.5L584.8 434.5L578.7 438.0L572.8 443.0L569.2 447.5L565.8 453.3L563.8 458.7L562.5 465.7L562.5 473.0L563.7 479.3L566.0 485.7L569.3 491.3L581.5 493.5L587.8 493.3L593.2 492.2L597.7 490.5L603.0 487.7L608.3 483.8L614.0 478.3L619.8 470.2L622.5 464.5L624.2 458.8L624.7 455.5L624.7 449.8Z" fill="#b2b2b2"/>
<path d="M621.8 437.7L615.8 434.3L610.7 432.5L604.5 431.3L596.5 431.3L590.3 432.5L584.8 434.5L578.7 438.0L572.8 443.0L569.2 447.5L565.8 453.3L563.8 458.7L562.5 465.7L562.5 473.0L563.7 479.3L566.0 485.7L569.0 490.8L581.0 493.2L586.7 493.2L590.7 492.5L596.0 490.8L601.5 488.2L607.2 484.3L611.7 480.3L615.5 476.0L619.3 470.3L621.7 465.7L623.7 459.7L624.5 453.5L624.3 449.5Z" fill="#b4b4b4"/>
<path d="M621.7 437.7L615.8 434.3L610.7 432.5L604.5 431.3L596.5 431.3L590.3 432.5L584.8 434.5L578.7 438.0L574.2 441.7L570.7 445.5L567.0 451.0L563.8 458.7L562.7 464.2L562.3 470.3L563.3 478.0L565.3 484.2L568.7 490.3L580.5 492.8L584.7 493.0L590.0 492.3L595.5 490.7L600.5 488.3L606.2 484.7L610.8 480.7L614.5 476.7L618.3 471.3L621.2 466.0L623.2 460.3L624.0 456.0L624.2 450.8Z" fill="#b6b6b6"/>
<path d="M621.2 437.3L615.8 434.3L608.7 432.0L602.3 431.2L596.5 431.3L590.3 432.5L584.8 434.5L578.7 438.0L574.2 441.7L570.7 445.5L567.0 451.0L563.8 458.7L562.7 464.2L562.3 470.3L563.0 476.5L564.7 482.5L568.3 489.8L580.2 492.5L585.3 492.7L590.0 492.0L595.0 490.5L601.0 487.7L606.7 483.8L610.7 480.3L615.0 475.5L618.8 469.8L621.5 464.3L623.0 459.7L623.8 454.5L623.8 450.2Z" fill="#b8b8b8"/>
<path d="M620.3 436.7L615.8 434.3L608.7 432.0L602.3 431.2L595.2 431.5L586.8 433.7L581.8 436.0L577.5 438.8L572.8 443.0L569.2 447.5L565.8 453.3L563.8 458.7L562.5 465.7L562.5 473.0L563.3 478.0L565.3 484.2L568.2 489.5L581.3 492.3L585.7 492.3L590.0 491.7L594.5 490.3L600.8 487.3L606.5 483.5L611.3 479.2L615.8 473.8L619.0 468.8L621.3 463.8L623.0 458.2L623.5 454.8L623.3 448.3Z" fill="#bababa"/>
<path d="M620.0 436.5L613.3 433.3L608.7 432.0L602.3 431.2L595.2 431.5L586.8 433.7L581.8 436.0L577.5 438.8L572.8 443.0L569.2 447.5L565.8 453.3L563.8 458.7L562.5 465.7L562.5 473.0L563.3 478.0L565.3 484.2L567.8 489.0L580.8 492.0L585.8 492.0L590.7 491.2L595.7 489.5L601.0 486.8L605.5 483.8L610.8 479.2L614.5 475.0L618.5 469.0L621.3 462.8L622.7 458.2L623.2 455.0L623.2 449.3L622.5 445.3Z" fill="#bcbcbc"/>
<path d="M619.7 436.3L613.3 433.3L608.7 432.0L602.3 431.2L596.5 431.3L590.3 432.5L584.8 434.5L578.7 438.0L574.2 441.7L570.7 445.5L567.0 451.0L563.8 458.7L562.7 464.2L562.3 470.3L563.0 476.5L564.7 482.5L567.5 488.5L579.2 491.5L588.3 491.3L593.8 489.8L600.0 487.0L608.0 481.3L612.5 476.8L617.0 470.8L620.2 464.8L621.8 460.2L622.8 455.0L622.8 449.0Z" fill="#bebebe"/>
<path d="M619.2 436.0L613.3 433.3L607.8 431.8L602.3 431.2L595.2 431.5L590.3 432.5L584.8 434.5L578.7 438.0L574.2 441.7L570.7 445.5L567.0 451.0L563.8 458.7L562.7 464.2L562.3 470.3L563.0 476.5L564.7 482.5L567.2 487.8L579.0 491.2L588.2 491.0L594.2 489.3L598.7 487.3L603.8 484.2L607.8 481.0L613.2 475.5L616.7 470.7L619.3 465.8L621.5 460.0L622.5 455.0L622.5 448.8Z" fill="#c0c0c0"/>
<path d="M618.8 436.0L613.3 433.3L607.8 431.8L602.3 431.2L595.2 431.5L590.3 432.5L584.8 434.5L578.7 438.0L574.2 441.7L570.7 445.5L567.0 451.0L563.8 458.7L562.7 464.2L562.3 470.3L563.0 476.5L564.7 482.5L566.8 487.3L577.8 490.7L582.3 491.2L587.2 490.8L592.2 489.7L596.8 487.8L601.7 485.2L607.8 480.5L612.8 475.3L616.7 470.0L619.7 464.2L621.7 458.0L622.3 453.2L622.2 448.5Z" fill="#c2c2c2"/>
<path d="M618.3 435.7L613.3 433.3L607.8 431.8L602.3 431.2L595.2 431.5L590.3 432.5L584.8 434.5L578.7 438.0L574.2 441.7L570.7 445.5L567.0 451.0L563.8 458.7L562.7 464.2L562.3 470.3L563.0 476.5L564.7 482.5L566.7 487.0L577.7 490.3L581.8 490.8L587.2 490.5L593.5 488.8L598.7 486.5L603.5 483.5L607.7 480.2L612.3 475.3L616.3 469.8L619.5 463.7L621.3 457.8L622.0 453.3L621.8 448.3L621.0 444.2Z" fill="#c4c4c4"/>
<path d="M617.8 435.5L613.3 433.3L607.8 431.8L602.3 431.2L595.2 431.5L590.3 432.5L584.8 434.5L578.7 438.0L574.2 441.7L570.7 445.5L567.0 451.0L564.7 456.2L563.0 462.2L562.3 468.3L562.7 474.3L564.0 480.5L566.3 486.3L577.5 490.0L581.5 490.5L587.0 490.2L593.3 488.5L598.8 486.0L603.3 483.2L607.8 479.5L612.0 475.2L616.0 469.7L618.7 464.7L620.8 458.5L621.7 453.3L621.5 448.2L620.5 443.5Z" fill="#c6c6c6"/>
<path d="M617.3 435.2L611.8 432.8L605.8 431.5L602.3 431.2L595.2 431.5L590.3 432.5L584.8 434.5L578.7 438.0L574.2 441.7L570.7 445.5L567.0 451.0L564.7 456.2L563.0 462.2L562.3 468.3L562.7 474.3L564.0 480.5L566.2 486.0L578.3 489.8L581.2 490.2L587.0 489.8L593.7 488.0L598.7 485.7L603.8 482.3L608.0 478.8L613.0 473.3L616.7 467.8L619.5 461.7L620.7 457.7L621.3 453.2L621.2 448.0L620.3 444.0Z" fill="#c8c8c8"/>
<path d="M616.8 435.0L611.8 432.8L605.8 431.5L602.3 431.2L595.2 431.5L590.3 432.5L584.8 434.5L578.7 438.0L574.2 441.7L570.7 445.5L567.0 451.0L564.7 456.2L563.0 462.2L562.3 468.3L562.7 474.3L564.0 480.5L566.0 485.5L578.2 489.5L581.2 489.8L586.8 489.5L593.5 487.7L598.5 485.3L604.5 481.3L608.7 477.7L612.5 473.3L616.5 467.3L619.2 461.5L620.7 455.8L621.0 453.2L620.7 446.8Z" fill="#cacaca"/>
<path d="M616.2 434.5L610.7 432.5L604.5 431.3L598.7 431.2L593.2 431.8L586.8 433.7L581.8 436.0L574.2 441.7L570.7 445.5L567.0 451.0L564.7 456.2L563.0 462.2L562.3 468.3L562.5 473.0L563.7 479.3L565.7 484.8L576.5 488.8L581.0 489.5L585.5 489.3L590.3 488.3L595.3 486.5L601.3 483.2L606.5 479.2L612.2 473.2L615.5 468.3L617.8 463.8L620.0 457.3L620.7 453.0L620.3 446.8L619.0 441.8Z" fill="#cccccc"/>
<path d="M615.7 434.3L610.7 432.5L604.5 431.3L598.7 431.2L593.2 431.8L586.8 433.7L581.8 436.0L574.2 441.7L570.7 445.5L567.0 451.0L564.7 456.2L563.2 461.3L562.3 468.3L562.5 473.0L563.7 479.3L565.3 484.2L572.7 487.3L577.2 488.7L581.0 489.2L585.3 489.0L590.2 488.0L595.5 486.0L602.3 482.0L606.7 478.5L611.7 473.2L614.8 468.7L617.8 462.8L619.7 457.2L620.3 452.7L620.0 446.7L618.7 441.8Z" fill="#cecece"/>
<path d="M615.0 434.0L610.7 432.5L604.5 431.3L598.7 431.2L593.2 431.8L586.8 433.7L581.8 436.0L577.5 438.8L572.8 443.0L569.2 447.5L567.0 451.0L564.7 456.2L563.0 462.2L562.3 468.3L562.5 473.0L563.7 479.3L565.5 484.0L572.7 487.0L577.2 488.3L581.2 488.8L587.2 488.3L592.5 486.8L598.5 484.0L604.3 480.0L608.8 475.8L612.3 471.7L615.7 466.5L618.3 460.5L619.8 454.2L620.0 449.3L619.5 445.8L617.8 440.5Z" fill="#d0d0d0"/>
<path d="M614.7 434.0L610.7 432.5L604.5 431.3L598.7 431.2L593.2 431.8L586.8 433.7L581.8 436.0L574.2 441.7L570.7 445.5L567.0 451.0L564.7 456.2L563.2 461.3L562.3 468.3L562.5 473.0L563.3 478.0L565.0 483.3L575.2 487.5L579.2 488.3L584.8 488.3L589.2 487.5L594.0 485.8L599.2 483.2L605.5 478.5L609.7 474.3L614.3 468.0L617.5 461.7L619.0 456.7L619.7 452.0L619.3 446.7L618.0 441.8Z" fill="#d2d2d2"/>
<path d="M614.0 433.7L608.7 432.0L604.5 431.3L598.7 431.2L593.2 431.8L586.8 433.7L581.8 436.0L574.2 441.7L570.7 445.5L567.0 451.0L564.7 456.2L563.2 461.3L562.3 468.3L562.5 473.0L563.3 478.0L564.8 482.8L575.2 487.2L579.2 488.0L584.5 488.0L589.5 487.0L594.2 485.3L599.5 482.5L605.8 477.7L610.0 473.3L614.7 466.7L617.3 461.0L618.8 455.7L619.3 451.3L618.8 445.8L617.7 441.8Z" fill="#d4d4d4"/>
<path d="M613.3 433.3L607.8 431.8L602.3 431.2L596.5 431.3L591.7 432.2L586.8 433.7L581.8 436.0L577.5 438.8L572.8 443.0L569.2 447.5L567.0 451.0L564.7 456.2L563.2 461.3L562.3 468.3L562.5 473.0L563.3 478.0L564.8 482.3L575.2 486.8L579.3 487.7L585.3 487.5L592.3 485.7L597.0 483.5L602.8 479.7L607.3 475.7L610.8 471.7L614.5 466.2L617.2 460.3L618.7 454.5L618.8 447.8L618.0 443.8Z" fill="#d6d6d6"/>
<path d="M612.8 433.2L607.8 431.8L602.3 431.2L593.2 431.8L586.8 433.7L581.8 436.0L574.2 441.7L570.7 445.5L567.0 451.0L564.7 456.2L563.2 461.3L562.3 470.3L563.0 476.5L564.3 481.5L570.8 484.8L575.2 486.5L579.5 487.3L583.7 487.3L589.7 486.2L595.2 484.0L601.5 480.2L605.0 477.3L609.5 472.7L613.8 466.5L616.7 460.5L618.2 455.2L618.5 452.7L618.2 445.8L616.5 440.7Z" fill="#d8d8d8"/>
<path d="M612.3 433.2L608.7 432.0L602.3 431.2L596.5 431.3L591.7 432.2L586.8 433.7L581.8 436.0L574.2 441.7L570.7 445.5L567.7 449.8L563.8 458.7L562.7 464.2L562.3 470.3L563.0 476.5L564.2 481.0L572.0 485.0L575.8 486.3L579.8 487.0L584.7 486.8L591.8 485.0L596.8 482.7L601.0 480.0L605.8 476.0L610.3 471.0L613.7 466.0L616.5 459.8L617.8 454.8L618.2 448.3L617.5 444.5L616.0 440.3Z" fill="#dadada"/>
<path d="M611.8 433.2L608.7 432.0L602.3 431.2L596.5 431.3L591.7 432.2L586.8 433.7L581.8 436.0L574.2 441.7L570.7 445.5L567.7 449.8L563.8 458.7L562.7 464.2L562.3 470.3L562.8 475.5L564.0 480.3L571.3 484.3L575.3 485.8L580.5 486.7L584.2 486.5L589.7 485.3L594.3 483.5L599.8 480.3L604.5 476.7L609.0 472.0L613.0 466.3L616.0 460.0L617.3 455.3L617.8 451.5L617.5 446.0L616.0 441.2Z" fill="#dcdcdc"/>
<path d="M611.0 432.7L602.3 431.2L596.5 431.3L591.7 432.2L586.8 433.7L581.8 436.0L574.2 441.7L570.7 445.5L567.7 449.8L563.8 458.7L562.7 464.2L562.3 468.3L562.7 474.3L563.8 479.8L572.5 484.5L575.3 485.5L578.8 486.2L583.7 486.2L589.3 485.0L596.3 482.0L601.0 479.0L605.5 475.2L609.7 470.5L613.0 465.5L615.5 460.2L617.3 452.8L617.3 447.3L616.5 443.5L614.0 437.8Z" fill="#dedede"/>
<path d="M610.3 432.5L602.3 431.2L596.5 431.3L590.3 432.5L581.8 436.0L574.2 441.7L570.7 445.5L567.7 449.8L563.8 458.7L562.7 464.2L562.3 468.3L562.5 473.0L563.7 479.2L573.0 484.3L577.8 485.7L583.0 485.8L589.0 484.7L594.5 482.5L599.3 479.7L604.2 475.8L609.0 470.7L613.2 464.3L615.0 460.3L616.8 453.5L617.0 447.7L616.3 444.2L613.5 437.7Z" fill="#e0e0e0"/>
<path d="M609.7 432.3L604.5 431.3L598.7 431.2L590.3 432.5L581.8 436.0L574.2 441.7L570.7 445.5L567.7 449.8L563.8 458.7L562.7 464.2L562.3 468.3L562.5 473.0L563.5 478.5L569.7 482.3L574.0 484.3L578.2 485.3L582.0 485.5L587.5 484.7L593.5 482.5L597.5 480.3L603.3 476.0L608.2 471.0L611.8 465.8L615.2 458.7L616.5 453.0L616.7 448.2L615.8 443.7L613.8 439.0Z" fill="#e2e2e2"/>
<path d="M609.0 432.2L604.5 431.3L598.7 431.2L590.3 432.5L581.8 436.0L574.2 441.7L570.7 445.5L567.7 449.8L563.8 458.7L562.7 464.2L562.3 468.3L562.5 473.0L563.3 477.8L569.5 481.8L573.7 483.8L578.7 485.0L583.2 485.0L588.3 484.0L592.8 482.3L599.5 478.5L604.3 474.5L608.7 469.7L612.0 464.7L614.8 458.3L616.2 452.3L616.2 447.2L615.2 442.8L612.7 437.7Z" fill="#e4e4e4"/>
<path d="M608.2 432.0L604.5 431.3L598.7 431.2L590.3 432.5L581.8 436.0L577.5 438.8L572.8 443.0L567.7 449.8L563.8 458.7L562.7 464.2L562.3 468.3L562.8 475.5L563.7 477.5L568.0 480.5L573.3 483.3L577.8 484.5L583.8 484.5L590.5 482.8L595.5 480.5L600.3 477.3L606.0 472.2L610.2 466.8L613.3 461.0L614.8 456.8L615.8 451.5L615.7 446.3L614.7 442.5L612.3 437.8Z" fill="#e6e6e6"/>
<path d="M607.5 431.8L598.7 431.2L590.3 432.5L581.8 436.0L577.5 438.8L572.8 443.0L567.7 449.8L563.8 458.7L562.7 464.2L562.3 468.3L562.5 473.0L563.2 476.5L569.0 480.7L573.5 483.0L578.3 484.2L583.0 484.2L589.2 482.8L595.5 480.0L601.5 475.8L606.0 471.5L610.2 466.0L613.0 460.7L614.3 457.0L615.3 452.2L615.3 446.8L614.3 442.7L612.0 438.0Z" fill="#e8e8e8"/>
<path d="M606.7 431.7L602.3 431.2L596.5 431.3L591.7 432.2L586.8 433.7L580.2 437.0L572.8 443.0L567.7 449.8L563.8 458.7L562.7 464.2L562.3 468.3L562.7 474.3L563.3 476.0L569.2 480.3L574.2 482.8L579.3 483.8L583.5 483.7L590.2 482.0L594.8 479.8L601.2 475.5L605.8 471.0L609.8 465.7L612.5 460.7L614.0 456.5L615.0 451.0L614.8 446.3L613.7 442.0L610.7 436.7Z" fill="#eaeaea"/>
<path d="M605.8 431.5L596.5 431.3L591.7 432.2L586.8 433.7L580.2 437.0L572.8 443.0L567.7 449.8L563.8 458.7L562.7 464.2L562.3 468.3L562.5 473.0L563.2 475.2L568.2 479.2L573.2 482.0L577.2 483.2L582.5 483.3L587.7 482.3L594.5 479.5L600.8 475.2L605.5 470.7L609.5 465.3L612.0 460.7L613.7 456.0L614.5 451.7L614.5 447.0L613.2 441.8L610.2 436.7Z" fill="#ececec"/>
<path d="M605.2 431.5L596.5 431.3L591.7 432.2L586.8 433.7L580.2 437.0L572.8 443.0L567.7 449.8L563.8 458.7L562.5 465.7L562.3 470.3L562.8 474.2L568.2 478.7L573.0 481.5L578.0 482.8L582.8 482.8L589.7 481.2L595.0 478.7L600.5 474.8L605.0 470.5L609.3 464.7L611.8 459.8L613.7 454.0L614.2 449.7L613.8 445.5L612.5 441.3L610.0 437.2Z" fill="#eeeeee"/>
<path d="M604.2 431.3L595.2 431.5L590.3 432.5L586.0 434.0L581.8 436.0L577.5 438.8L570.7 445.5L567.7 449.8L565.3 454.5L563.8 458.7L562.5 465.7L562.5 473.0L568.0 478.0L573.3 481.2L576.7 482.2L582.8 482.3L587.7 481.3L593.7 478.8L598.2 476.0L601.8 473.0L606.2 468.3L609.2 464.0L611.8 458.5L613.2 454.0L613.7 448.0L613.0 444.0L611.3 440.0L608.7 436.2Z" fill="#f0f0f0"/>
<path d="M603.3 431.3L598.7 431.2L593.2 431.8L584.8 434.5L580.2 437.0L575.8 440.2L572.8 443.0L569.2 447.5L565.8 453.3L563.8 458.7L562.7 464.2L562.3 468.3L562.5 472.2L569.0 478.2L573.3 480.7L577.7 481.8L582.8 481.8L587.5 480.8L591.8 479.2L597.5 475.8L600.7 473.3L607.0 466.3L610.5 460.3L612.2 455.8L613.2 450.0L613.0 446.3L612.3 443.3L610.8 440.0L607.3 435.3Z" fill="#f2f2f2"/>
<path d="M602.2 431.2L593.2 431.8L584.8 434.5L580.2 437.0L575.8 440.2L572.8 443.0L569.2 447.5L565.8 453.3L563.8 458.7L562.7 464.2L562.5 471.2L569.8 478.2L573.8 480.3L578.0 481.3L583.7 481.2L589.7 479.5L593.8 477.5L599.0 474.0L602.8 470.5L606.7 465.8L608.5 463.0L611.5 456.2L612.5 451.5L612.5 446.5L611.5 442.5L609.2 438.3Z" fill="#f4f4f4"/>
<path d="M601.2 431.2L596.5 431.3L591.7 432.2L586.8 433.7L581.8 436.0L574.2 441.7L568.5 448.5L565.8 453.3L563.8 458.7L562.7 464.2L562.3 469.8L568.3 476.3L571.0 478.3L575.0 480.2L578.8 480.8L584.0 480.5L590.5 478.5L595.2 476.0L599.7 472.7L603.8 468.5L607.5 463.5L610.2 458.2L611.5 453.8L612.0 450.5L611.8 445.8L610.8 442.3L609.0 439.0Z" fill="#f6f6f6"/>
<path d="M599.8 431.2L595.2 431.5L590.3 432.5L581.8 436.0L574.2 441.7L570.7 445.5L567.7 449.8L563.8 458.7L562.7 464.2L562.3 468.7L568.5 475.7L572.2 478.3L576.2 479.8L581.5 480.2L586.2 479.3L590.3 477.8L594.2 475.8L600.3 471.2L604.3 466.8L607.5 462.2L609.8 457.2L611.3 450.7L611.0 444.8L609.2 440.3L607.3 437.8Z" fill="#f8f8f8"/>
<path d="M598.3 431.3L590.3 432.5L584.8 434.5L580.2 437.0L572.8 443.0L567.7 449.8L563.8 458.7L562.7 464.2L562.5 467.2L567.8 474.0L571.8 477.3L576.7 479.2L582.2 479.3L585.7 478.7L590.3 477.0L594.8 474.5L599.0 471.3L603.3 466.8L607.0 461.5L609.0 457.2L610.3 452.3L610.7 448.2L610.2 444.5L608.7 440.8L606.8 438.3Z" fill="#fafafa"/>
<path d="M596.3 431.5L591.7 432.2L586.8 433.7L580.2 437.0L572.8 443.0L569.2 447.5L567.0 451.0L563.8 458.7L562.7 465.2L568.2 473.0L572.2 476.5L576.3 478.2L581.0 478.5L586.3 477.5L589.8 476.2L593.8 474.0L598.5 470.5L602.7 466.2L606.0 461.3L608.0 457.2L609.5 451.7L609.7 447.0L609.2 444.3L607.8 441.2L605.5 438.2Z" fill="#fcfcfc"/>
<path d="M593.3 431.8L584.8 434.5L577.5 438.8L570.7 445.5L565.8 453.3L563.0 462.2L569.3 472.3L571.5 474.5L574.3 476.2L577.3 477.0L582.2 477.0L587.0 475.8L592.0 473.5L597.2 469.8L601.0 466.0L606.0 458.3L607.5 454.3L608.3 449.7L608.2 446.0L607.2 442.7L605.8 440.5L603.3 438.0Z" fill="#ffffff"/>
<path d="M469.44 344.23L375.92 441.04L393.75 458.27L487.28 361.46Z" fill="url(#bg1)" shape-rendering="crispEdges"/>
<path d="M486.28 343.82L583.19 436.22L566.63 453.59L469.72 361.18Z" fill="url(#bg2)" shape-rendering="crispEdges"/>
<path d="M429.00 352.50a49.00 49.00 0 1 0 98.00 0a49.00 49.00 0 1 0 -98.00 0Z" shape-rendering="crispEdges" fill="#480000"/>
<path d="M495.0 306.5L485.3 304.0L475.2 303.5L467.0 304.7L458.0 307.7L449.5 312.5L445.3 315.8L441.3 319.8L436.3 326.5L432.0 335.3L429.5 345.0L429.0 355.2L430.2 363.3L433.2 372.3L438.0 380.8L441.3 385.0L445.3 389.0L452.0 394.0L462.0 398.7L472.8 395.8L478.5 393.8L487.8 389.2L497.0 382.8L501.5 379.0L511.2 368.7L517.5 359.3L522.0 349.7L525.2 339.5L522.7 332.5L519.5 326.5L514.5 319.8L509.3 314.8L503.0 310.3Z" fill="#4f0000"/>
<path d="M497.8 307.7L488.8 304.7L480.7 303.5L470.5 304.0L460.8 306.5L452.0 310.8L445.3 315.8L441.3 319.8L438.0 324.0L433.2 332.5L430.2 341.5L429.0 349.7L429.5 359.8L432.0 369.5L436.3 378.3L441.3 385.0L445.3 389.0L449.5 392.3L458.0 397.2L467.5 395.3L477.3 392.3L484.3 389.0L492.5 383.8L500.7 377.2L508.0 369.5L514.8 360.2L518.7 353.0L520.8 347.5L524.0 336.7L522.7 332.5L519.5 326.5L514.5 319.8L510.5 315.8L506.3 312.5Z" fill="#550000"/>
<path d="M501.8 309.7L492.0 305.5L482.8 303.7L473.0 303.7L465.0 305.2L458.0 307.7L452.8 310.3L448.2 313.5L441.3 319.8L438.0 324.0L435.2 328.5L431.0 338.3L429.2 347.5L429.2 357.3L430.7 365.3L433.2 372.3L435.8 377.5L439.0 382.2L445.3 389.0L449.5 392.3L455.7 396.0L472.0 392.7L478.2 390.3L488.5 384.7L497.5 377.8L505.2 370.3L510.8 363.3L515.7 355.7L520.0 345.3L523.0 333.3L519.5 326.5L514.5 319.8L509.3 314.8Z" fill="#5a0000"/>
<path d="M503.0 310.3L495.0 306.5L485.3 304.0L475.2 303.5L467.0 304.7L458.0 307.7L449.5 312.5L445.3 315.8L441.3 319.8L436.3 326.5L432.0 335.3L429.8 343.0L429.0 349.7L429.0 355.2L430.2 363.3L433.2 372.3L438.0 380.8L441.3 385.0L445.3 389.0L452.0 394.0L453.5 394.7L469.3 392.0L476.8 389.3L484.0 385.7L492.0 380.3L500.5 373.0L506.3 366.7L512.5 358.2L517.8 347.5L522.0 331.2L519.5 326.5L514.5 319.8L509.3 314.8Z" fill="#5f0000"/>
<path d="M503.8 310.8L495.0 306.5L487.3 304.3L480.7 303.5L475.2 303.5L467.0 304.7L458.0 307.7L449.5 312.5L445.3 315.8L441.3 319.8L436.3 326.5L432.0 335.3L429.8 343.0L429.0 349.7L429.0 355.2L429.8 361.8L431.0 366.5L433.2 372.3L438.0 380.8L441.3 385.0L445.3 389.0L451.0 393.3L461.8 392.2L468.5 390.8L475.5 388.3L482.2 385.0L490.3 379.7L497.0 374.2L505.2 365.7L511.2 357.5L516.8 346.3L518.5 340.8L520.8 328.8L517.8 324.0L514.5 319.8L509.3 314.8Z" fill="#650000"/>
<path d="M506.3 312.5L497.8 307.7L492.0 305.5L487.3 304.3L480.7 303.5L475.2 303.5L468.5 304.3L460.8 306.5L452.0 310.8L445.3 315.8L441.3 319.8L438.0 324.0L433.2 332.5L430.2 341.5L429.0 349.7L429.5 359.8L432.0 369.5L436.3 378.3L441.3 385.0L448.8 391.8L459.3 391.2L464.8 390.3L472.0 388.2L480.8 384.0L488.3 379.2L495.0 373.8L501.2 367.8L507.5 360.2L512.8 351.7L515.8 345.0L518.0 336.8L519.5 326.5L514.5 319.8L510.5 315.8Z" fill="#6a0000"/>
<path d="M509.3 314.8L501.8 309.7L492.0 305.5L482.8 303.7L473.0 303.7L463.8 305.5L454.0 309.7L446.5 314.8L440.3 321.0L435.2 328.5L431.0 338.3L429.2 347.5L429.2 357.3L431.0 366.5L435.2 376.3L440.3 383.8L447.2 390.5L462.8 389.3L469.5 387.5L475.2 385.2L482.5 381.2L489.7 376.2L495.0 371.7L502.0 364.5L507.3 357.7L511.2 351.5L514.7 344.0L517.0 334.8L518.2 324.5L514.5 319.8Z" fill="#6f0000"/>
<path d="M510.5 315.8L503.8 310.8L495.0 306.5L485.3 304.0L475.2 303.5L467.0 304.7L458.0 307.7L449.5 312.5L445.3 315.8L441.3 319.8L436.3 326.5L432.0 335.3L429.5 345.0L429.0 355.2L430.2 363.3L433.2 372.3L438.0 380.8L445.2 388.8L460.3 388.3L466.7 386.8L473.2 384.3L481.0 380.2L488.7 374.8L494.2 370.2L500.7 363.5L505.3 357.7L510.0 350.3L513.5 342.8L515.2 337.3L516.8 322.7Z" fill="#750000"/>
<path d="M510.5 315.8L503.8 310.8L495.0 306.5L485.3 304.0L475.2 303.5L467.0 304.7L458.0 307.7L449.5 312.5L445.3 315.8L441.3 319.8L436.3 326.5L432.0 335.3L429.5 345.0L429.0 355.2L430.2 363.3L433.2 372.3L438.0 380.8L443.5 387.2L458.3 387.2L464.0 386.0L469.8 384.0L478.0 380.0L484.5 375.8L490.7 371.0L497.0 365.0L502.3 358.8L507.3 351.7L511.3 344.0L513.7 337.3L514.7 331.8L515.3 320.8Z" fill="#7a0000"/>
<path d="M513.7 319.0L506.3 312.5L497.8 307.7L488.8 304.7L480.7 303.5L470.5 304.0L460.8 306.5L452.0 310.8L445.3 315.8L441.3 319.8L438.0 324.0L433.2 332.5L430.2 341.5L429.0 349.7L429.5 359.8L432.0 369.5L436.3 378.3L441.8 385.5L455.5 386.0L460.8 385.2L466.5 383.5L470.7 381.8L480.2 376.7L486.5 372.2L492.3 367.2L498.0 361.3L502.3 356.0L507.3 348.3L509.8 343.3L512.2 337.0L513.2 332.3Z" fill="#7f0000"/>
<path d="M512.0 317.3L506.3 312.5L497.8 307.7L488.8 304.7L480.7 303.5L470.5 304.0L460.8 306.5L452.0 310.8L445.3 315.8L440.3 321.0L435.2 328.5L431.0 338.3L429.2 347.5L429.2 357.3L431.0 366.5L435.2 376.3L440.3 383.7L451.7 384.7L457.7 384.2L462.7 383.0L470.2 380.2L475.7 377.3L483.3 372.3L489.5 367.3L494.5 362.5L499.8 356.3L504.5 349.7L508.7 341.8L510.8 335.8L511.8 331.2Z" fill="#850000"/>
<path d="M510.2 315.7L503.8 310.8L495.0 306.5L485.3 304.0L475.2 303.5L467.0 304.7L459.2 307.2L452.0 310.8L445.3 315.8L440.3 321.0L435.2 328.5L431.0 338.3L429.2 347.5L429.2 357.3L430.7 365.3L433.2 372.3L438.5 381.5L450.7 383.2L455.7 382.8L461.7 381.5L467.7 379.3L474.7 375.8L481.8 371.2L489.2 365.2L494.5 359.8L500.3 352.7L504.3 346.5L507.8 339.3L509.8 333.2L510.7 327.8Z" fill="#8a0000"/>
<path d="M508.3 314.2L501.8 309.7L492.0 305.5L482.8 303.7L475.2 303.5L467.0 304.7L459.2 307.2L452.0 310.8L445.3 315.8L440.3 321.0L435.2 328.5L431.0 338.3L429.3 346.2L429.0 355.2L430.2 363.3L432.7 371.2L437.5 379.8L447.8 381.5L454.2 381.3L460.5 380.0L467.3 377.5L473.8 374.2L479.8 370.3L487.5 364.2L493.5 358.2L498.2 352.5L502.5 346.0L505.8 339.5L508.2 332.8L509.2 327.0Z" fill="#8f0000"/>
<path d="M506.3 312.5L497.8 307.7L492.0 305.5L482.8 303.7L475.2 303.5L467.0 304.7L459.2 307.2L452.0 310.8L445.3 315.8L440.3 321.0L435.2 328.5L432.0 335.3L429.5 345.0L429.0 355.2L429.8 361.8L432.0 369.5L435.8 377.5L446.7 379.8L452.2 379.8L459.2 378.5L465.3 376.3L473.8 372.0L479.8 368.0L486.2 362.8L492.2 356.8L497.2 350.7L501.5 344.0L504.3 338.3L506.3 332.8L507.5 327.2L507.5 321.0Z" fill="#940000"/>
<path d="M504.3 311.2L496.7 307.2L488.8 304.7L480.7 303.5L473.0 303.7L465.0 305.2L458.0 307.7L452.0 310.8L445.3 315.8L440.3 321.0L435.2 328.5L432.0 335.3L429.8 343.0L429.0 349.7L429.5 359.8L431.0 366.5L434.7 375.3L446.3 378.2L452.5 378.0L458.2 376.8L465.2 374.3L472.3 370.7L478.7 366.5L484.8 361.5L490.7 355.7L495.7 349.5L500.3 342.2L503.3 335.8L505.3 329.3L506.0 324.7L505.8 320.0Z" fill="#9a0000"/>
<path d="M502.2 310.0L495.0 306.5L487.3 304.3L480.7 303.5L473.0 303.7L465.0 305.2L458.0 307.7L452.0 310.8L445.3 315.8L440.3 321.0L435.2 328.5L432.0 335.3L429.8 343.0L429.0 349.7L429.3 358.7L431.0 366.5L433.7 373.3L445.0 376.3L450.8 376.3L457.0 375.2L464.2 372.7L470.8 369.3L476.8 365.5L483.3 360.3L489.3 354.3L494.2 348.3L498.5 341.5L502.2 333.5L503.5 329.0L504.3 322.8L504.0 318.3Z" fill="#9f0000"/>
<path d="M500.0 308.8L495.0 306.5L487.3 304.3L480.7 303.5L471.7 303.8L465.0 305.2L458.0 307.7L452.0 310.8L445.3 315.8L440.3 321.0L435.8 327.3L432.7 333.7L430.2 341.5L429.0 349.7L429.2 357.3L430.7 365.3L432.7 371.0L440.3 373.7L444.3 374.5L450.2 374.5L456.3 373.3L463.5 370.8L470.5 367.3L476.7 363.3L483.2 358.0L488.3 352.7L492.7 347.2L496.7 340.8L500.5 332.3L502.3 324.8L502.5 320.0Z" fill="#a40000"/>
<path d="M497.7 307.7L490.8 305.2L484.2 303.8L475.2 303.5L470.5 304.0L463.8 305.5L458.0 307.7L452.0 310.8L445.3 315.8L440.3 321.0L436.3 326.5L433.2 332.5L430.7 339.5L429.2 347.5L429.0 355.2L429.8 361.8L431.7 368.5L438.2 371.2L443.2 372.5L448.7 372.7L454.8 371.7L461.2 369.7L468.5 366.3L475.0 362.3L481.7 357.0L488.7 349.5L493.0 343.3L496.8 336.2L499.2 330.0L500.3 325.0L500.7 319.8L500.2 316.2Z" fill="#a90101"/>
<path d="M495.2 306.7L488.8 304.7L482.8 303.7L475.2 303.5L468.5 304.3L463.8 305.5L458.0 307.7L452.0 310.8L445.3 315.8L440.3 321.0L436.3 326.5L433.2 332.5L431.0 338.3L429.8 343.0L429.0 349.7L429.2 357.3L430.8 365.8L437.0 368.8L442.5 370.5L448.3 370.7L453.8 369.8L460.7 367.8L467.8 364.7L474.7 360.5L480.7 355.7L486.3 349.7L491.0 343.2L494.7 336.3L497.3 329.2L498.5 323.7L498.7 318.3L497.7 313.5Z" fill="#ae0101"/>
<path d="M492.5 305.7L487.3 304.3L480.7 303.5L475.2 303.5L468.5 304.3L463.8 305.5L458.0 307.7L452.0 310.8L445.3 315.8L440.3 321.0L436.3 326.5L433.2 332.5L431.0 338.3L429.8 343.0L429.0 349.7L429.2 357.3L430.2 363.2L436.8 366.8L440.7 368.2L444.2 368.7L452.0 368.2L458.3 366.7L465.3 364.0L472.3 360.2L479.8 354.3L484.8 349.0L489.3 342.7L493.2 335.2L495.5 328.3L496.7 321.5L496.5 316.5L495.5 312.7Z" fill="#b30101"/>
<path d="M489.8 305.0L480.7 303.5L473.0 303.7L467.0 304.7L460.8 306.5L454.0 309.7L449.5 312.5L445.3 315.8L441.3 319.8L438.0 324.0L435.2 328.5L432.0 335.3L430.2 341.5L429.2 347.5L429.0 355.2L429.7 360.3L435.3 364.0L440.2 366.0L445.8 366.7L452.2 366.2L458.8 364.7L465.5 362.2L473.7 357.5L479.2 353.0L484.2 347.5L488.5 341.0L491.7 334.2L493.5 328.3L494.5 322.7L494.5 316.7L493.3 312.2Z" fill="#b80202"/>
<path d="M487.0 304.5L482.8 303.7L475.2 303.5L465.0 305.2L459.2 307.2L454.0 309.7L449.5 312.5L445.3 315.8L441.3 319.8L438.0 324.0L435.2 328.5L432.0 335.3L430.2 341.5L429.3 346.2L429.2 357.3L435.3 361.8L440.0 363.8L443.8 364.5L451.8 364.3L459.3 362.8L465.7 360.5L473.0 356.3L478.7 351.7L483.5 346.2L486.8 341.0L490.0 334.0L491.8 327.3L492.5 322.5L492.2 315.2L490.8 311.2Z" fill="#bd0202"/>
<path d="M483.7 303.8L473.0 303.7L463.8 305.5L454.0 309.7L449.5 312.5L445.3 315.8L441.3 319.8L438.0 324.0L435.2 328.5L432.7 333.7L429.8 343.0L429.0 349.7L429.0 354.2L434.3 358.8L439.0 361.3L444.3 362.5L450.8 362.7L457.8 361.7L463.8 359.8L470.5 356.5L476.2 352.3L481.2 347.2L485.3 341.0L488.0 335.2L490.2 326.7L490.5 318.3L489.8 314.3L487.8 309.7Z" fill="#c20303"/>
<path d="M480.3 303.5L475.2 303.5L468.5 304.3L459.2 307.2L454.0 309.7L449.5 312.5L445.3 315.8L441.3 319.8L438.0 324.0L435.2 328.5L432.0 335.3L430.2 341.5L429.0 351.0L433.3 355.5L438.3 358.8L443.2 360.3L448.5 361.0L455.5 360.7L462.0 359.2L468.8 356.2L474.7 352.2L479.0 348.0L482.7 343.2L485.8 337.2L488.0 330.2L488.7 325.3L488.5 318.3L487.3 313.3L485.2 309.2Z" fill="#c60303"/>
<path d="M476.8 303.5L468.5 304.3L463.8 305.5L458.0 307.7L449.5 312.5L445.3 315.8L441.3 319.8L436.3 326.5L433.2 332.5L431.0 338.3L429.8 343.0L429.2 347.5L434.7 354.0L440.0 357.3L444.2 358.7L449.8 359.5L456.7 359.2L461.8 358.0L468.2 355.3L474.5 351.0L478.7 346.8L482.2 342.0L485.2 335.7L486.7 330.0L487.2 324.0L486.5 317.8L484.8 312.7L482.7 309.2Z" fill="#cb0404"/>
<path d="M478.8 308.0L473.2 303.7L463.8 305.5L458.0 307.7L452.0 310.8L446.5 314.8L441.3 319.8L436.3 326.5L433.2 332.5L431.0 338.3L429.8 343.0L429.8 344.2L432.0 347.7L436.2 352.7L439.0 354.7L445.0 357.2L450.7 358.2L456.7 358.0L461.5 357.0L468.0 354.3L472.8 351.2L477.0 347.3L479.8 343.8L482.7 339.0L484.8 333.0L485.7 328.0L485.5 321.7L484.0 315.7L482.0 311.7Z" fill="#d00505"/>
<path d="M476.2 308.3L469.7 304.3L463.8 305.5L458.0 307.7L452.0 310.8L446.5 314.8L441.3 319.8L438.0 324.0L435.2 328.5L432.7 333.7L430.5 340.2L433.8 346.8L437.2 351.0L441.3 354.0L446.2 356.0L451.3 357.0L456.0 357.0L461.5 356.0L465.7 354.5L470.5 351.8L476.2 347.0L480.0 342.0L482.2 337.8L484.0 332.0L484.5 328.2L484.2 322.2L482.5 316.5L479.5 311.5Z" fill="#d40505"/>
<path d="M473.8 309.0L465.5 305.2L460.8 306.5L454.0 309.7L449.5 312.5L445.3 315.8L439.0 322.7L435.2 328.5L432.7 333.7L431.8 336.7L435.5 346.0L437.7 349.0L440.2 351.3L445.3 354.3L449.2 355.5L452.3 356.0L459.0 355.7L464.3 354.2L468.5 352.2L473.2 348.8L477.2 344.7L479.7 341.0L482.3 334.8L483.3 329.8L483.3 324.7L482.2 319.5L480.2 315.3L478.5 313.0Z" fill="#d90606"/>
<path d="M471.5 309.7L463.3 307.2L460.5 306.7L452.8 310.3L448.2 313.5L441.3 319.8L438.0 324.0L433.7 331.5L434.3 337.2L435.7 342.3L437.3 345.8L439.2 348.3L442.5 351.3L446.8 353.7L451.0 354.8L455.3 355.2L460.7 354.5L465.2 353.0L471.0 349.7L475.8 345.2L477.5 343.0L480.3 338.0L482.0 332.8L482.5 328.7L482.2 324.0L480.8 319.5L478.3 315.2L475.8 312.5Z" fill="#dd0707"/>
<path d="M468.0 310.0L463.3 309.2L454.3 309.5L449.5 312.5L445.3 315.8L441.3 319.8L437.0 325.5L436.0 331.7L436.0 336.2L436.8 341.0L439.8 347.0L442.3 349.7L444.8 351.5L450.0 353.7L454.8 354.3L459.3 354.0L464.2 352.7L468.8 350.3L473.0 347.2L476.3 343.5L478.5 340.2L480.7 335.0L481.5 331.0L481.5 325.8L480.2 320.7L478.0 316.8L475.8 314.3L472.2 311.7Z" fill="#e30707"/>
<path d="M471.7 312.8L468.3 311.5L463.5 310.7L458.8 310.8L455.3 311.5L451.5 312.8L446.8 315.5L442.0 320.5L439.8 324.3L438.3 328.5L437.5 333.2L437.5 337.3L438.3 341.5L440.0 345.2L442.0 347.8L444.7 350.2L448.3 352.2L452.5 353.3L457.7 353.5L460.8 353.0L465.3 351.5L470.0 348.8L472.8 346.5L476.2 342.7L479.0 337.7L480.0 334.8L480.8 330.0L480.7 326.0L479.7 322.0L477.7 318.2L474.8 315.0Z" fill="#e60909"/>
<path d="M470.2 313.3L465.0 312.0L460.2 312.0L454.5 313.3L451.2 314.8L446.8 317.8L442.0 323.7L439.2 330.8L438.7 334.0L438.8 338.7L440.8 344.5L442.3 346.7L446.0 350.0L448.8 351.5L453.0 352.7L457.8 352.8L461.7 352.2L465.0 351.0L470.2 348.0L473.8 344.7L476.5 341.2L478.7 336.8L479.8 332.7L479.7 324.8L478.8 322.2L476.5 318.2L474.0 315.7Z" fill="#e90b0b"/>
<path d="M470.0 314.3L464.8 313.0L460.8 313.0L455.2 314.3L448.7 318.0L443.7 323.3L440.5 330.0L439.8 333.0L439.7 337.2L440.3 340.8L441.8 344.3L443.3 346.5L446.0 349.0L449.2 350.8L453.2 352.0L460.5 351.8L463.5 351.0L468.0 348.8L471.0 346.7L475.2 342.2L477.7 337.8L478.8 334.5L479.5 330.0L479.3 326.8L478.3 323.0L476.7 319.8L474.0 316.8Z" fill="#eb0e0e"/>
<path d="M471.7 316.2L469.3 315.0L465.5 314.0L462.0 313.8L457.8 314.5L454.5 315.7L450.8 317.7L445.2 323.0L443.5 325.5L441.3 330.5L440.7 333.8L440.7 338.2L442.5 343.8L446.2 348.2L450.2 350.5L453.0 351.3L455.8 351.7L460.2 351.3L463.3 350.5L467.8 348.3L470.8 346.2L474.2 342.7L476.2 339.7L478.2 334.8L478.8 328.2L478.2 324.7L476.8 321.5L475.3 319.3Z" fill="#ee1111"/>
<path d="M471.0 316.7L467.8 315.3L464.2 314.7L458.0 315.3L451.7 318.2L448.8 320.3L446.0 323.3L444.0 326.3L442.2 330.7L441.5 333.8L441.5 338.2L443.5 344.0L446.7 347.7L449.5 349.5L452.8 350.7L460.0 350.8L463.7 349.8L468.0 347.7L470.7 345.7L473.8 342.3L475.5 339.8L477.7 334.7L478.2 332.2L478.2 327.5L477.3 324.2L476.0 321.5L473.3 318.3Z" fill="#f01414"/>
<path d="M471.0 317.5L468.5 316.3L465.0 315.5L461.2 315.5L457.8 316.2L451.3 319.3L446.5 324.0L444.2 327.7L442.8 331.2L442.2 337.5L443.8 343.2L447.5 347.5L451.0 349.5L455.2 350.5L460.8 350.2L464.5 349.0L467.7 347.3L470.2 345.5L473.5 342.0L475.2 339.5L477.0 335.2L477.7 332.0L477.7 328.2L477.2 325.7L475.7 322.2L474.5 320.5Z" fill="#f21717"/>
<path d="M470.5 318.0L467.8 316.8L464.5 316.2L458.2 316.8L455.0 318.0L451.7 320.0L447.0 324.5L444.0 329.8L443.0 333.7L442.8 336.8L444.2 342.3L445.8 345.0L447.7 346.8L451.3 349.0L455.5 350.0L460.8 349.7L466.8 347.3L470.8 344.3L473.3 341.5L475.7 337.5L476.7 334.7L477.2 328.5L476.7 326.0L475.2 322.5L473.2 320.0Z" fill="#f41a1a"/>
<path d="M468.7 317.8L465.7 317.0L461.7 316.8L456.7 318.0L451.2 321.2L446.8 325.8L444.2 331.5L443.5 336.8L444.0 340.0L445.3 343.2L448.8 347.0L451.2 348.3L454.3 349.3L461.0 349.2L464.2 348.2L468.3 345.8L473.2 341.0L475.3 337.2L476.3 334.0L476.5 327.5L475.3 324.0L473.8 321.7L471.2 319.2Z" fill="#f61e1e"/>
<path d="M470.0 319.2L464.8 317.5L458.7 318.0L453.7 320.2L450.3 322.7L448.3 324.8L446.5 327.5L445.0 330.8L444.3 333.5L444.2 337.3L445.7 342.5L447.0 344.5L449.3 346.7L451.3 347.8L454.5 348.8L460.5 348.8L466.8 346.3L472.0 341.8L473.8 339.2L475.7 334.8L476.2 328.7L475.5 325.8L474.0 322.8Z" fill="#f82222"/>
<path d="M470.5 320.2L465.3 318.2L462.3 318.0L459.0 318.5L454.2 320.5L451.2 322.7L448.5 325.5L445.5 331.2L444.8 334.2L444.8 338.0L446.3 342.5L449.2 345.8L453.2 348.0L457.3 348.7L459.8 348.5L462.7 347.8L466.3 346.2L471.3 342.0L473.7 338.7L475.2 335.0L475.7 332.7L475.7 328.7L475.0 326.0L473.7 323.3Z" fill="#f92626"/>
<path d="M468.0 319.5L464.8 318.7L461.0 318.7L456.7 319.8L452.2 322.5L448.2 326.8L445.7 332.7L445.5 338.5L446.2 340.8L447.7 343.5L451.3 346.7L456.5 348.2L460.2 348.0L462.8 347.3L468.3 344.3L470.7 342.2L473.0 339.0L475.2 333.0L475.3 330.2L474.8 327.2L473.7 324.3L472.2 322.3Z" fill="#fa2a2a"/>
<path d="M469.2 320.7L464.5 319.2L458.7 319.7L453.2 322.3L449.5 325.8L448.0 328.0L446.3 332.0L445.8 337.0L446.8 341.0L449.8 345.0L454.3 347.3L456.2 347.7L461.3 347.3L467.0 344.8L471.7 340.3L474.3 334.8L474.8 329.7L474.0 326.2L472.8 324.0Z" fill="#fb2e2e"/>
<path d="M469.0 321.2L464.5 319.7L461.0 319.7L458.0 320.3L453.0 323.0L449.2 327.0L446.8 332.0L446.3 337.0L447.8 341.8L449.2 343.7L451.3 345.5L455.8 347.2L458.3 347.3L461.7 346.8L467.5 344.0L471.7 339.7L474.0 334.5L474.3 329.3L472.7 324.7L470.8 322.5Z" fill="#fc3333"/>
<path d="M468.8 321.7L464.7 320.2L459.7 320.3L454.7 322.3L450.2 326.3L447.2 332.3L446.8 337.2L448.3 341.7L451.0 344.7L455.5 346.7L461.3 346.5L465.8 344.7L468.2 343.0L470.8 340.2L473.5 334.8L474.0 330.5L473.5 327.7L472.5 325.3Z" fill="#fc3838"/>
<path d="M468.5 322.0L465.0 320.7L460.0 320.7L454.8 322.7L450.5 326.5L447.8 331.5L447.3 333.7L447.3 337.5L448.7 341.3L451.3 344.3L453.3 345.5L456.2 346.3L461.0 346.2L465.7 344.3L468.0 342.7L470.5 340.0L473.2 334.5L473.5 329.8L471.8 325.2Z" fill="#fd3c3c"/>
<path d="M468.2 322.3L464.5 321.0L459.5 321.2L455.0 323.0L450.8 326.7L448.3 331.2L447.7 334.2L447.7 336.8L449.0 341.0L451.7 344.0L455.8 345.8L461.5 345.7L467.0 343.0L470.2 339.8L472.7 334.8L473.2 331.8L473.0 329.3L471.2 325.0Z" fill="#fd4141"/>
<path d="M466.5 322.0L464.0 321.3L460.7 321.3L457.0 322.3L452.7 325.2L450.2 328.2L448.3 332.5L448.2 337.5L449.8 341.5L452.7 344.2L457.5 345.7L461.8 345.2L466.8 342.7L469.2 340.5L470.8 338.2L472.7 333.0L472.3 328.3L470.3 324.7Z" fill="#fe4646"/>
<path d="M466.3 322.3L463.7 321.7L460.7 321.7L457.5 322.5L453.3 325.0L450.7 328.0L448.7 332.7L448.5 337.2L450.0 341.0L452.7 343.7L456.7 345.2L461.7 344.8L466.0 342.8L469.0 340.2L470.3 338.3L472.2 333.7L472.2 329.3L470.3 325.3L468.7 323.7Z" fill="#fe4b4b"/>
<path d="M466.2 322.7L463.5 322.0L460.7 322.0L457.5 322.8L453.8 325.0L450.5 328.8L449.0 332.7L448.8 336.8L450.2 340.5L453.2 343.5L457.0 344.8L459.8 344.8L462.7 344.2L467.0 341.7L470.3 337.7L471.8 333.5L471.7 329.0L469.8 325.3Z" fill="#fe5050"/>
<path d="M466.0 323.0L463.5 322.3L460.7 322.3L457.5 323.2L453.7 325.5L451.2 328.3L449.3 332.7L449.2 336.8L450.8 340.8L453.7 343.3L457.3 344.5L459.7 344.5L463.0 343.7L466.7 341.5L469.8 337.8L471.3 334.2L471.3 329.2L469.3 325.3Z" fill="#fe5656"/>
<path d="M465.5 323.2L460.5 322.7L457.8 323.3L454.3 325.3L451.0 329.2L449.5 333.3L449.7 337.5L451.2 340.7L453.8 343.0L457.7 344.2L462.5 343.5L466.3 341.3L469.8 337.2L471.2 333.2L471.0 329.3L470.2 327.2L468.7 325.2Z" fill="#ff5b5b"/>
<path d="M465.8 323.7L463.5 323.0L460.2 323.0L457.3 323.8L454.3 325.7L451.5 328.8L450.0 332.3L449.8 336.8L451.0 339.8L453.7 342.5L457.8 343.8L461.3 343.5L465.8 341.3L469.2 337.7L470.7 334.0L470.7 329.5L469.2 326.3Z" fill="#ff6060"/>
<path d="M466.7 324.5L463.7 323.3L459.2 323.5L455.0 325.5L452.2 328.3L450.3 332.2L450.0 335.8L451.0 339.2L453.3 341.8L456.8 343.3L460.7 343.3L464.5 341.8L467.8 339.0L470.0 335.2L470.5 330.5L469.3 327.2Z" fill="#ff6565"/>
<path d="M465.3 324.2L462.8 323.5L460.7 323.5L457.5 324.3L454.3 326.3L451.8 329.3L450.5 332.7L450.3 336.0L451.5 339.3L454.2 342.0L457.8 343.2L460.7 343.0L462.8 342.3L465.7 340.7L468.8 337.0L470.2 333.0L470.0 329.7L468.3 326.3Z" fill="#ff6a6a"/>
<path d="M465.0 324.3L463.2 323.8L460.2 323.8L457.8 324.5L454.3 326.7L452.3 329.0L450.7 333.2L450.7 336.2L451.7 339.0L454.0 341.5L457.8 342.8L462.0 342.3L465.8 340.2L468.2 337.5L469.8 333.2L469.7 329.7L468.2 326.7Z" fill="#ff7070"/>
<path d="M466.0 325.2L462.2 324.0L458.5 324.5L455.3 326.2L453.0 328.5L451.2 332.2L450.8 335.3L452.0 339.0L453.8 341.0L457.7 342.5L460.8 342.3L464.2 341.0L467.3 338.2L469.2 334.7L469.5 330.5L468.5 327.7Z" fill="#ff7575"/>
<path d="M464.7 324.8L462.7 324.3L458.3 324.8L455.5 326.3L452.5 329.7L451.3 332.5L451.2 335.8L452.2 338.7L454.7 341.2L457.5 342.2L460.2 342.2L462.5 341.5L465.5 339.7L468.0 336.7L469.2 333.5L469.0 329.7L467.5 326.8Z" fill="#ff7a7a"/>
<path d="M464.7 325.2L463.0 324.7L460.0 324.7L458.2 325.2L454.7 327.3L452.7 329.8L451.5 333.0L451.5 336.0L452.5 338.7L455.0 341.0L457.3 341.8L460.3 341.8L462.2 341.3L465.8 339.0L467.7 336.7L468.8 333.7L468.8 330.2L467.5 327.3Z" fill="#ff8080"/>
<path d="M464.3 325.3L460.5 324.8L458.0 325.5L455.8 326.7L453.2 329.5L452.0 332.0L451.7 335.3L452.7 338.3L455.0 340.7L458.3 341.7L461.2 341.3L464.8 339.5L467.3 336.7L468.7 332.8L468.3 329.5L467.0 327.2Z" fill="#ff8585"/>
<path d="M464.8 325.8L462.8 325.2L459.2 325.3L456.0 326.8L453.7 329.2L452.2 332.3L452.0 335.8L453.0 338.3L454.3 339.8L457.0 341.2L459.8 341.3L463.3 340.2L466.2 337.8L468.2 334.0L468.3 330.8L467.0 327.7Z" fill="#ff8a8a"/>
<path d="M464.2 325.8L460.5 325.3L458.0 326.0L455.3 327.7L453.5 329.8L452.5 332.0L452.2 335.2L453.3 338.3L455.3 340.2L457.7 341.0L462.0 340.5L465.2 338.5L467.0 336.2L468.0 333.3L467.8 330.0L466.5 327.5Z" fill="#ff8f8f"/>
<path d="M463.8 326.0L460.0 325.7L458.2 326.2L455.5 327.8L453.7 330.0L452.7 332.3L452.5 335.5L453.2 337.5L455.3 339.8L457.5 340.7L461.2 340.5L464.3 338.8L466.7 336.2L467.8 332.5L467.5 329.8L466.7 328.2Z" fill="#ff9595"/>
<path d="M463.5 326.2L460.5 325.8L458.0 326.5L455.8 327.8L453.8 330.2L452.8 332.7L452.8 335.8L453.8 338.0L455.7 339.7L458.2 340.5L461.3 340.2L464.3 338.5L466.3 336.2L467.5 333.0L467.3 330.3L466.2 328.0Z" fill="#ff9a9a"/>
<path d="M464.0 326.7L462.5 326.2L459.2 326.3L456.7 327.5L454.3 329.8L453.2 332.3L453.0 335.3L453.8 337.5L455.2 339.0L457.8 340.2L460.8 340.0L463.7 338.7L465.8 336.5L467.2 333.3L467.2 330.8L466.2 328.5Z" fill="#ff9f9f"/>
<path d="M463.7 326.8L461.8 326.3L458.5 326.8L456.2 328.2L454.5 330.0L453.3 332.7L453.2 334.5L453.8 337.0L455.7 339.0L457.7 339.8L461.0 339.7L463.7 338.3L465.8 336.0L466.8 333.5L466.8 330.7L465.8 328.5Z" fill="#ffa5a5"/>
<path d="M463.3 327.0L462.2 326.7L458.7 327.0L456.3 328.3L454.7 330.2L453.7 332.3L453.5 335.0L454.2 337.0L455.7 338.7L457.5 339.5L460.7 339.5L463.0 338.5L465.5 336.0L466.7 332.8L466.5 330.5L465.2 328.2Z" fill="#ffaaaa"/>
<path d="M463.0 327.2L460.5 326.8L458.5 327.3L456.5 328.5L454.7 330.7L453.8 332.8L453.8 335.3L454.5 337.0L456.0 338.5L458.2 339.3L460.8 339.2L463.7 337.7L465.5 335.5L466.3 333.2L466.3 331.0L465.3 328.8Z" fill="#ffafaf"/>
<path d="M463.2 327.5L459.3 327.3L457.7 328.0L455.5 329.8L454.2 332.5L454.0 334.7L454.7 336.7L456.0 338.2L458.0 339.0L460.3 339.0L462.5 338.2L464.8 336.0L466.0 333.5L466.0 331.0L464.8 328.7Z" fill="#ffb5b5"/>
<path d="M462.2 327.5L459.7 327.5L457.3 328.5L455.8 329.8L454.7 331.8L454.5 335.7L455.5 337.3L457.3 338.5L459.3 338.8L462.5 337.8L464.5 336.0L465.5 334.2L465.8 332.7L465.5 330.3L464.0 328.3Z" fill="#ffbaba"/>
<path d="M462.8 328.0L460.2 327.7L458.5 328.2L455.7 330.5L454.5 334.0L454.8 335.7L456.3 337.7L458.5 338.5L460.7 338.3L462.5 337.5L464.2 336.0L465.3 333.7L465.5 331.5L464.8 329.7Z" fill="#ffbfbf"/>
<path d="M462.8 328.3L459.3 328.2L457.5 329.0L456.0 330.5L455.0 332.5L454.8 334.5L455.5 336.3L456.7 337.5L458.5 338.2L460.7 338.0L462.7 337.0L464.2 335.5L465.0 333.8L465.2 331.5L464.7 330.0Z" fill="#ffc5c5"/>
<path d="M462.3 328.5L458.7 328.7L457.3 329.5L455.7 331.5L455.2 334.7L455.8 336.2L457.3 337.5L458.5 337.8L461.2 337.5L464.0 335.2L464.8 333.2L464.8 331.5L464.0 329.7Z" fill="#ffcaca"/>
<path d="M462.3 328.8L458.7 329.0L456.0 331.5L455.5 334.5L456.0 335.8L457.2 337.0L458.5 337.5L460.7 337.3L462.3 336.5L463.8 334.8L464.5 333.2L464.5 331.5L463.8 330.0Z" fill="#ffcfcf"/>
<path d="M462.2 329.2L458.7 329.3L456.5 331.3L455.8 333.0L455.8 334.5L457.3 336.7L458.7 337.2L460.7 337.0L462.0 336.3L463.7 334.5L464.2 331.7L463.5 330.2Z" fill="#ffd5d5"/>
<path d="M462.0 329.5L459.2 329.5L456.7 331.7L456.2 334.2L457.5 336.3L459.0 336.8L460.5 336.7L461.8 336.0L463.3 334.3L463.8 332.7L463.7 331.3Z" fill="#ffdada"/>
<path d="M462.3 330.2L460.0 329.7L458.3 330.3L457.3 331.3L456.7 332.7L456.7 334.5L457.8 336.0L460.2 336.3L462.7 334.7L463.3 333.2L463.3 331.7Z" fill="#ffdfdf"/>
<path d="M461.7 330.3L459.7 330.2L457.8 331.3L457.0 334.0L458.0 335.5L460.3 335.8L462.3 334.3L462.8 333.3L462.8 331.7Z" fill="#ffe5e5"/>
<path d="M461.7 331.0L459.8 330.7L458.3 331.5L457.5 333.5L458.5 335.2L460.2 335.3L461.8 334.2L462.3 332.0Z" fill="#ffeaea"/>
<path d="M460.7 331.3L459.8 331.3L458.5 332.3L458.7 334.3L460.0 334.7L461.3 333.7L461.7 332.5Z" fill="#ffefef"/>
</svg>
</body></html>
